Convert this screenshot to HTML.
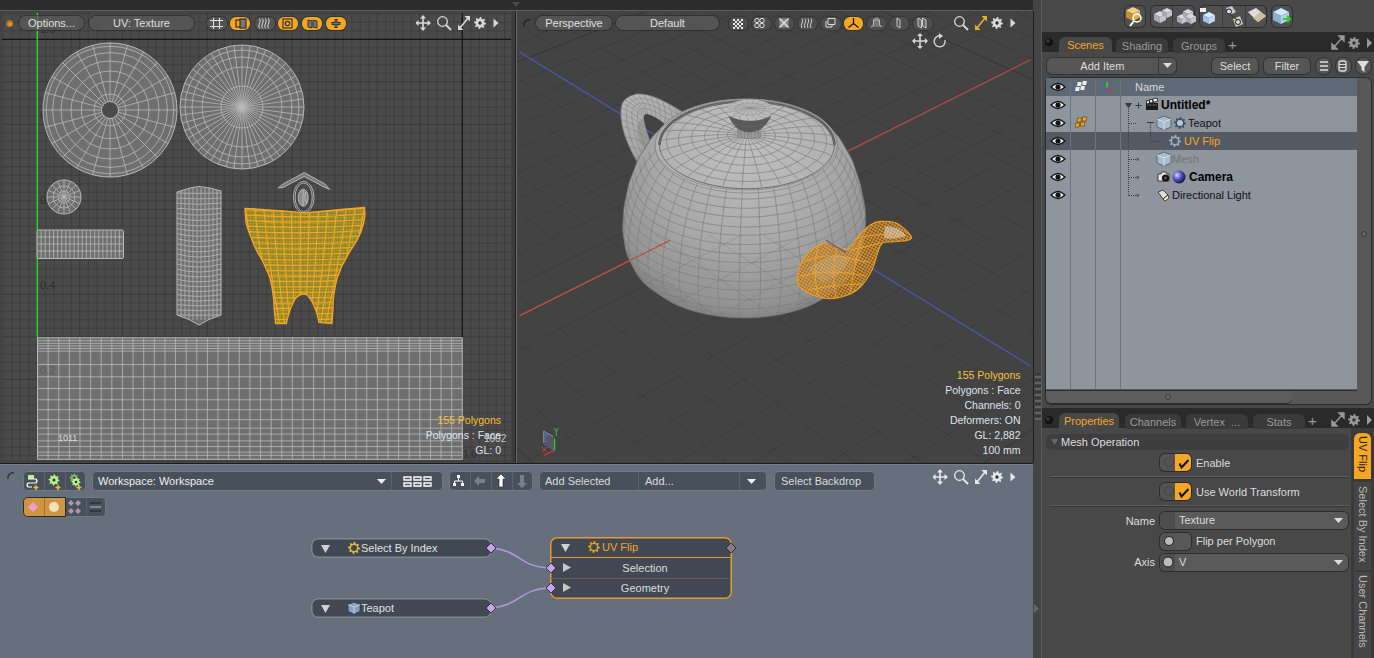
<!DOCTYPE html>
<html><head><meta charset="utf-8"><style>
html,body{margin:0;padding:0;width:1374px;height:658px;overflow:hidden;background:#3a3a3a;font-family:"Liberation Sans", sans-serif;}
div{box-sizing:border-box;}
svg{position:absolute;}
</style></head><body>
<div style="position:absolute;left:0px;top:0px;width:1374px;height:658px;background:#3a3a3a"></div><div style="position:absolute;left:0px;top:0px;width:1034px;height:10px;background:#2c2c2c"></div><div style="position:absolute;left:0px;top:10px;width:1034px;height:1px;background:#5c5c5c"></div><div style="position:absolute;left:0;top:11px;width:512px;height:452px;background:#424242;overflow:hidden"><svg width="512" height="452" viewBox="0 11 512 452" style="left:0;top:0"><rect x="2" y="13" width="509" height="447" fill="#4a4a4a"/><path d="M3.3 13V460M11.8 13V460M20.3 13V460M28.8 13V460M45.8 13V460M54.3 13V460M62.8 13V460M71.3 13V460M88.3 13V460M96.8 13V460M105.3 13V460M113.8 13V460M130.8 13V460M139.3 13V460M147.8 13V460M156.3 13V460M173.3 13V460M181.8 13V460M190.3 13V460M198.8 13V460M215.8 13V460M224.3 13V460M232.8 13V460M241.3 13V460M258.3 13V460M266.8 13V460M275.3 13V460M283.8 13V460M300.8 13V460M309.3 13V460M317.8 13V460M326.3 13V460M343.3 13V460M351.8 13V460M360.3 13V460M368.8 13V460M385.8 13V460M394.3 13V460M402.8 13V460M411.3 13V460M428.3 13V460M436.8 13V460M445.3 13V460M453.8 13V460M470.8 13V460M479.3 13V460M487.8 13V460M496.3 13V460M2 13.8H511M2 22.3H511M2 30.8H511M2 47.8H511M2 56.3H511M2 64.8H511M2 73.3H511M2 90.3H511M2 98.8H511M2 107.3H511M2 115.8H511M2 132.8H511M2 141.3H511M2 149.8H511M2 158.3H511M2 175.3H511M2 183.8H511M2 192.3H511M2 200.8H511M2 217.8H511M2 226.3H511M2 234.8H511M2 243.3H511M2 260.3H511M2 268.8H511M2 277.3H511M2 285.8H511M2 302.8H511M2 311.3H511M2 319.8H511M2 328.3H511M2 345.3H511M2 353.8H511M2 362.3H511M2 370.8H511M2 387.8H511M2 396.3H511M2 404.8H511M2 413.3H511M2 430.3H511M2 438.8H511M2 447.3H511M2 455.8H511" stroke="#3f3f3f" stroke-width="1" fill="none"/><path d="M37.3 13V460M79.8 13V460M122.3 13V460M164.8 13V460M207.3 13V460M249.8 13V460M292.3 13V460M334.8 13V460M377.3 13V460M419.8 13V460M462.3 13V460M504.8 13V460M2 39.3H511M2 81.8H511M2 124.3H511M2 166.8H511M2 209.3H511M2 251.8H511M2 294.3H511M2 336.8H511M2 379.3H511M2 421.8H511" stroke="#393939" stroke-width="1" fill="none"/><path d="M462.3 13V460M2 39.3H511" stroke="#141414" stroke-width="1.2" fill="none"/><path d="M37.3 13V337.5" stroke="#22dd22" stroke-width="1.4" fill="none"/><text x="40" y="289" font-size="11" fill="#2e2e2e" font-family="Liberation Sans">0.4</text><text x="40" y="204" font-size="11" fill="#2e2e2e" font-family="Liberation Sans">0.6</text><text x="40" y="119" font-size="11" fill="#2e2e2e" font-family="Liberation Sans">0.8</text><text x="40" y="33" font-size="11" fill="#2e2e2e" font-family="Liberation Sans">1.0</text><ellipse cx="110" cy="110" rx="67" ry="67" fill="#6f6f6f" stroke="#b9b9b9" stroke-width="1"/><path d="M118.5 110L177 110M118.21 112.2L174.72 127.34M117.36 114.25L168.02 143.5M116.01 116.01L157.38 157.38M114.25 117.36L143.5 168.02M112.2 118.21L127.34 174.72M110 118.5L110 177M107.8 118.21L92.66 174.72M105.75 117.36L76.5 168.02M103.99 116.01L62.62 157.38M102.64 114.25L51.98 143.5M101.79 112.2L45.28 127.34M101.5 110L43 110M101.79 107.8L45.28 92.66M102.64 105.75L51.98 76.5M103.99 103.99L62.62 62.62M105.75 102.64L76.5 51.98M107.8 101.79L92.66 45.28M110 101.5L110 43M112.2 101.79L127.34 45.28M114.25 102.64L143.5 51.98M116.01 103.99L157.38 62.62M117.36 105.75L168.02 76.5M118.21 107.8L174.72 92.66" stroke="#b9b9b9" stroke-width="0.8" fill="none"/><ellipse cx="110" cy="110" rx="16" ry="16" fill="none" stroke="#b9b9b9" stroke-width="0.8"/><ellipse cx="110" cy="110" rx="28.7" ry="28.7" fill="none" stroke="#b9b9b9" stroke-width="0.8"/><ellipse cx="110" cy="110" rx="39" ry="39" fill="none" stroke="#b9b9b9" stroke-width="0.8"/><ellipse cx="110" cy="110" rx="49" ry="49" fill="none" stroke="#b9b9b9" stroke-width="0.8"/><ellipse cx="110" cy="110" rx="57.4" ry="57.4" fill="none" stroke="#b9b9b9" stroke-width="0.8"/><ellipse cx="110" cy="110" rx="63.8" ry="63.8" fill="none" stroke="#b9b9b9" stroke-width="0.8"/><circle cx="110" cy="110" r="8.5" fill="#4a4a4a" stroke="#b9b9b9" stroke-width="1"/><ellipse cx="242" cy="107" rx="62" ry="62" fill="#6f6f6f" stroke="#b9b9b9" stroke-width="1"/><path d="M242 107L304 107M242 107L303.47 115.09M242 107L301.89 123.05M242 107L299.28 130.73M242 107L295.69 138M242 107L291.19 144.74M242 107L285.84 150.84M242 107L279.74 156.19M242 107L273 160.69M242 107L265.73 164.28M242 107L258.05 166.89M242 107L250.09 168.47M242 107L242 169M242 107L233.91 168.47M242 107L225.95 166.89M242 107L218.27 164.28M242 107L211 160.69M242 107L204.26 156.19M242 107L198.16 150.84M242 107L192.81 144.74M242 107L188.31 138M242 107L184.72 130.73M242 107L182.11 123.05M242 107L180.53 115.09M242 107L180 107M242 107L180.53 98.91M242 107L182.11 90.95M242 107L184.72 83.27M242 107L188.31 76M242 107L192.81 69.26M242 107L198.16 63.16M242 107L204.26 57.81M242 107L211 53.31M242 107L218.27 49.72M242 107L225.95 47.11M242 107L233.91 45.53M242 107L242 45M242 107L250.09 45.53M242 107L258.05 47.11M242 107L265.73 49.72M242 107L273 53.31M242 107L279.74 57.81M242 107L285.84 63.16M242 107L291.19 69.26M242 107L295.69 76M242 107L299.28 83.27M242 107L301.89 90.95M242 107L303.47 98.91" stroke="#b9b9b9" stroke-width="0.8" fill="none"/><ellipse cx="242" cy="107" rx="21" ry="21" fill="none" stroke="#b9b9b9" stroke-width="0.8"/><ellipse cx="242" cy="107" rx="40" ry="40" fill="none" stroke="#b9b9b9" stroke-width="0.8"/><ellipse cx="242" cy="107" rx="50" ry="50" fill="none" stroke="#b9b9b9" stroke-width="0.8"/><ellipse cx="242" cy="107" rx="57" ry="57" fill="none" stroke="#b9b9b9" stroke-width="0.8"/><ellipse cx="64" cy="197" rx="17" ry="17" fill="#6f6f6f" stroke="#b9b9b9" stroke-width="1"/><path d="M64 197L81 197M64 197L79.71 203.51M64 197L76.02 209.02M64 197L70.51 212.71M64 197L64 214M64 197L57.49 212.71M64 197L51.98 209.02M64 197L48.29 203.51M64 197L47 197M64 197L48.29 190.49M64 197L51.98 184.98M64 197L57.49 181.29M64 197L64 180M64 197L70.51 181.29M64 197L76.02 184.98M64 197L79.71 190.49" stroke="#b9b9b9" stroke-width="0.8" fill="none"/><ellipse cx="64" cy="197" rx="6" ry="6" fill="none" stroke="#b9b9b9" stroke-width="0.8"/><ellipse cx="64" cy="197" rx="11" ry="11" fill="none" stroke="#b9b9b9" stroke-width="0.8"/><rect x="37" y="230" width="86.5" height="28.5" rx="1.5" fill="#6f6f6f" stroke="#b9b9b9" stroke-width="1"/><path d="M41.12 230V258.5M45.24 230V258.5M49.36 230V258.5M53.48 230V258.5M57.6 230V258.5M61.71 230V258.5M65.83 230V258.5M69.95 230V258.5M74.07 230V258.5M78.19 230V258.5M82.31 230V258.5M86.43 230V258.5M90.55 230V258.5M94.67 230V258.5M98.79 230V258.5M102.9 230V258.5M107.02 230V258.5M111.14 230V258.5M115.26 230V258.5M119.38 230V258.5M37 237H123.5M37 244H123.5M37 251H123.5" stroke="#b9b9b9" stroke-width="0.8" fill="none"/><path d="M177 192L190 188L199 186.5L210 188L221 191L221 315Q208 319 199 325Q190 319 177 315Z" fill="#6f6f6f" stroke="#b9b9b9" stroke-width="1"/><clipPath id="tallclip"><path d="M177 192L190 188L199 186.5L210 188L221 191L221 315Q208 319 199 325Q190 319 177 315Z"/></clipPath><g clip-path="url(#tallclip)"><path d="M181 188V320M185 188V320M189 188V320M193 188V320M197 188V320M201 188V320M205 188V320M209 188V320M213 188V320M217 188V320M177 193.08Q199 193.8 221 193.08M177 198.15Q199 199.59 221 198.15M177 203.23Q199 205.36 221 203.23M177 208.31Q199 211.1 221 208.31M177 213.38Q199 216.79 221 213.38M177 218.46Q199 222.44 221 218.46M177 223.54Q199 228.03 221 223.54M177 228.62Q199 233.55 221 228.62M177 233.69Q199 239.01 221 233.69M177 238.77Q199 244.38 221 238.77M177 243.85Q199 249.67 221 243.85M177 248.92Q199 254.88 221 248.92M177 254Q199 260 221 254M177 259.08Q199 265.03 221 259.08M177 264.15Q199 269.98 221 264.15M177 269.23Q199 274.84 221 269.23M177 274.31Q199 279.62 221 274.31M177 279.38Q199 284.32 221 279.38M177 284.46Q199 288.95 221 284.46M177 289.54Q199 293.52 221 289.54M177 294.62Q199 298.02 221 294.62M177 299.69Q199 302.48 221 299.69M177 304.77Q199 306.9 221 304.77M177 309.85Q199 311.28 221 309.85M177 314.92Q199 315.65 221 314.92" stroke="#b9b9b9" stroke-width="0.8" fill="none"/></g><path d="M278.4 187.8L283 184L304.2 172.6L325 184L329.6 189.3L325 187.5L304.2 176.5L283 187.5Z" fill="#7a7a7a" stroke="#bdbdbd" stroke-width="0.9"/><ellipse cx="303.7" cy="197.3" rx="10.3" ry="16" fill="none" stroke="#b9b9b9" stroke-width="0.9"/><ellipse cx="303.7" cy="197.3" rx="8.6" ry="14.3" fill="none" stroke="#b9b9b9" stroke-width="0.9"/><ellipse cx="303.2" cy="197.7" rx="5" ry="8.5" fill="#8a8a8a" stroke="#bdbdbd" stroke-width="0.9"/><path d="M303 190V206M306 192Q303 198 307 203" stroke="#c4c4c4" stroke-width="0.8" fill="none"/><defs><pattern id="opat" width="3" height="3" patternUnits="userSpaceOnUse"><rect width="3" height="3" fill="#8c8a2c"/><circle cx="1.5" cy="1.5" r="0.8" fill="#d09a2a"/></pattern></defs><clipPath id="oclip"><path d="M244.9 208.3Q275 210 305.2 212.8Q335 210 364.5 207.5L364.9 215.8Q363 232 352.6 247.4Q342 263 336.8 279Q333 295 332.9 310.7L331.9 323.5L319 322.5Q316 305 307.2 294.9Q301 292 295.3 298.8Q289 310 286.4 323.5L275.6 323.5Q274 310 273.6 298.8Q272 285 269.6 277Q266 268 261.7 259.3Q255 249 251.9 239.5Q247 228 245.9 221.7Z"/></clipPath><path d="M244.9 208.3Q275 210 305.2 212.8Q335 210 364.5 207.5L364.9 215.8Q363 232 352.6 247.4Q342 263 336.8 279Q333 295 332.9 310.7L331.9 323.5L319 322.5Q316 305 307.2 294.9Q301 292 295.3 298.8Q289 310 286.4 323.5L275.6 323.5Q274 310 273.6 298.8Q272 285 269.6 277Q266 268 261.7 259.3Q255 249 251.9 239.5Q247 228 245.9 221.7Z" fill="url(#opat)"/><g clip-path="url(#oclip)"><path d="M245 205Q252 260 270 326M254.23 205Q260 260 275 326M263.46 205Q268 260 280 326M272.69 205Q276 260 285 326M281.92 205Q284 260 290 326M291.15 205Q292 260 295 326M300.38 205Q300 260 300 326M309.62 205Q308 260 305 326M318.85 205Q316 260 310 326M328.08 205Q324 260 315 326M337.31 205Q332 260 320 326M346.54 205Q340 260 325 326M355.77 205Q348 260 330 326M365 205Q356 260 335 326M240 209Q305 214 370 208M240 214.52Q305 219.29 370 213.52M240 220.05Q305 224.57 370 219.05M240 225.57Q305 229.86 370 224.57M240 231.1Q305 235.14 370 230.1M240 236.62Q305 240.43 370 235.62M240 242.14Q305 245.71 370 241.14M240 247.67Q305 251 370 246.67M240 253.19Q305 256.29 370 252.19M240 258.71Q305 261.57 370 257.71M240 264.24Q305 266.86 370 263.24M240 269.76Q305 272.14 370 268.76M240 275.29Q305 277.43 370 274.29M240 280.81Q305 282.71 370 279.81M240 286.33Q305 288 370 285.33M240 291.86Q305 293.29 370 290.86M240 297.38Q305 298.57 370 296.38M240 302.9Q305 303.86 370 301.9M240 308.43Q305 309.14 370 307.43M240 313.95Q305 314.43 370 312.95M240 319.48Q305 319.71 370 318.48M240 325Q305 325 370 324" stroke="#f5a623" stroke-width="1.1" fill="none"/></g><path d="M244.9 208.3Q275 210 305.2 212.8Q335 210 364.5 207.5L364.9 215.8Q363 232 352.6 247.4Q342 263 336.8 279Q333 295 332.9 310.7L331.9 323.5L319 322.5Q316 305 307.2 294.9Q301 292 295.3 298.8Q289 310 286.4 323.5L275.6 323.5Q274 310 273.6 298.8Q272 285 269.6 277Q266 268 261.7 259.3Q255 249 251.9 239.5Q247 228 245.9 221.7Z" fill="none" stroke="#f5a623" stroke-width="1.3"/><rect x="37.5" y="337.8" width="424.8" height="121.5" fill="#6f6f6f" stroke="#b9b9b9" stroke-width="1"/><path d="M48.12 337.8V459.3M58.74 337.8V459.3M69.36 337.8V459.3M79.98 337.8V459.3M90.6 337.8V459.3M101.22 337.8V459.3M111.84 337.8V459.3M122.46 337.8V459.3M133.08 337.8V459.3M143.7 337.8V459.3M154.32 337.8V459.3M164.94 337.8V459.3M175.56 337.8V459.3M186.18 337.8V459.3M196.8 337.8V459.3M207.42 337.8V459.3M218.04 337.8V459.3M228.66 337.8V459.3M239.28 337.8V459.3M249.9 337.8V459.3M260.52 337.8V459.3M271.14 337.8V459.3M281.76 337.8V459.3M292.38 337.8V459.3M303 337.8V459.3M313.62 337.8V459.3M324.24 337.8V459.3M334.86 337.8V459.3M345.48 337.8V459.3M356.1 337.8V459.3M366.72 337.8V459.3M377.34 337.8V459.3M387.96 337.8V459.3M398.58 337.8V459.3M409.2 337.8V459.3M419.82 337.8V459.3M430.44 337.8V459.3M441.06 337.8V459.3M451.68 337.8V459.3M37.5 340.7H462.3M37.5 343.3H462.3M37.5 346H462.3M37.5 348.5H462.3M37.5 351.1H462.3M37.5 364.5H462.3M37.5 376.8H462.3M37.5 388.5H462.3M37.5 399.8H462.3M37.5 409.7H462.3M37.5 419.7H462.3M37.5 428.2H462.3M37.5 434.1H462.3M37.5 440.9H462.3M37.5 446.6H462.3M37.5 452.2H462.3M37.5 455.3H462.3" stroke="#b9b9b9" stroke-width="0.8" fill="none"/><text x="40" y="374" font-size="11" fill="#5e5e5e" font-family="Liberation Sans">0.2</text><text x="58" y="441" font-size="9" fill="#ddd" font-family="Liberation Sans">1011</text><text x="484" y="441.5" font-size="10" fill="#c8c8c8" font-family="Liberation Sans">1002</text><text x="463" y="458" font-size="10" fill="#2e2e2e" font-family="Liberation Sans">1.0</text></svg><div style="position:absolute;left:6px;top:9px;width:7px;height:7px;border-radius:50%;background:radial-gradient(circle at 60% 60%,#f0a030,#7a5010)"></div><div style="position:absolute;left:19px;top:5px;width:65px;height:14px;border-radius:7px;background:rgba(90,90,90,0.75);box-shadow:0 0 0 1px rgba(40,40,40,0.6);color:#e0e0e0;font-size:11px;line-height:14px;text-align:center;white-space:nowrap">Options...</div><div style="position:absolute;left:89px;top:5px;width:105px;height:14px;border-radius:7px;background:rgba(90,90,90,0.75);box-shadow:0 0 0 1px rgba(40,40,40,0.6);color:#e0e0e0;font-size:11px;line-height:14px;text-align:center;white-space:nowrap">UV: Texture</div><div style="position:absolute;left:207px;top:6px;width:20px;height:13px;border-radius:6px;background:rgba(85,85,85,0.8);box-shadow:0 0 0 1px rgba(45,45,45,0.7)"></div><div style="position:absolute;left:230px;top:6px;width:20px;height:13px;border-radius:6px;background:#f5a623;box-shadow:0 0 0 1px rgba(45,45,45,0.7)"></div><div style="position:absolute;left:255px;top:6px;width:20px;height:13px;border-radius:6px;background:rgba(85,85,85,0.8);box-shadow:0 0 0 1px rgba(45,45,45,0.7)"></div><div style="position:absolute;left:278px;top:6px;width:20px;height:13px;border-radius:6px;background:#f5a623;box-shadow:0 0 0 1px rgba(45,45,45,0.7)"></div><div style="position:absolute;left:302px;top:6px;width:20px;height:13px;border-radius:6px;background:#f5a623;box-shadow:0 0 0 1px rgba(45,45,45,0.7)"></div><div style="position:absolute;left:326px;top:6px;width:20px;height:13px;border-radius:6px;background:#f5a623;box-shadow:0 0 0 1px rgba(45,45,45,0.7)"></div><svg width="512" height="40" style="left:0;top:0" viewBox="0 11 512 40"><path d="M213.5 18V29M219.5 18V29M210 20.5H223M210 26.5H223" stroke="#e0e0e0" stroke-width="1.1" fill="none"/><rect x="236" y="20" width="6" height="7" fill="none" stroke="#333" stroke-width="1.2"/><rect x="240" y="19" width="6" height="9" fill="#777" stroke="#333" stroke-width="1.2"/><path d="M259.5 18.5Q261 21 259.5 23.5Q258 26 259.5 28.5" stroke="#d0d0d0" stroke-width="1.1" fill="none"/><path d="M262.5 18.5Q264 21 262.5 23.5Q261 26 262.5 28.5" stroke="#d0d0d0" stroke-width="1.1" fill="none"/><path d="M265.5 18.5Q267 21 265.5 23.5Q264 26 265.5 28.5" stroke="#d0d0d0" stroke-width="1.1" fill="none"/><path d="M268.5 18.5Q270 21 268.5 23.5Q267 26 268.5 28.5" stroke="#d0d0d0" stroke-width="1.1" fill="none"/><rect x="283" y="19" width="9" height="9" fill="none" stroke="#333" stroke-width="1.2"/><circle cx="287.5" cy="23.5" r="2.2" fill="none" stroke="#333" stroke-width="1.2"/><path d="M308 20L312 21V28L308 27Z M313 20L317 21V28L313 27Z" fill="#777" stroke="#333" stroke-width="1"/><path d="M336 19V28M331.5 23.5H340.5" stroke="#333" stroke-width="3" fill="none"/><path d="M336 20V27M332.5 23.5H339.5" stroke="#777" stroke-width="1" fill="none"/></svg><svg width="100" height="20" style="left:415.5px;top:2.5px" viewBox="0 0 100 20"><path d="M7 3.5V14.5M1.5 9H12.5" stroke="#d8d8d8" stroke-width="1.6"/><path d="M7 1L4 4.5H10ZM7 17L4 13.5H10ZM-1 9L2.5 6V12ZM15 9L11.5 6V12Z" fill="#d8d8d8"/><circle cx="26.5" cy="7.5" r="4.8" fill="none" stroke="#d8d8d8" stroke-width="1.3"/><path d="M30 11L35 16" stroke="#d8d8d8" stroke-width="1.8"/><path d="M42 16V10.5L47.5 16ZM54 2V7.5L48.5 2Z" fill="#d8d8d8"/><path d="M44 14L52 4" stroke="#d8d8d8" stroke-width="1.6"/><path d="M64.00 3.00L65.17 3.12L65.65 5.01L66.40 5.41L68.24 4.76L68.99 5.67L67.99 7.35L68.24 8.16L70.00 9.00L69.88 10.17L67.99 10.65L67.59 11.40L68.24 13.24L67.33 13.99L65.65 12.99L64.84 13.24L64.00 15.00L62.83 14.88L62.35 12.99L61.60 12.59L59.76 13.24L59.01 12.33L60.01 10.65L59.76 9.84L58.00 9.00L58.12 7.83L60.01 7.35L60.41 6.60L59.76 4.76L60.67 4.01L62.35 5.01L63.16 4.76Z" fill="#d8d8d8"/><circle cx="64" cy="9" r="1.68" fill="#333"/><path d="M77.5 4.5V13.5L82.5 9Z" fill="#d8d8d8"/></svg><div style="position:absolute;right:11px;top:401.5px;font-size:10.5px;line-height:15px;text-align:right;color:#dde3ee;white-space:nowrap"><span style="color:#f8c038">155 Polygons</span><br>Polygons : Face<br>GL: 0</div></div><div style="position:absolute;left:512px;top:11px;width:4px;height:451px;background:#3c3c3c"></div><div style="position:absolute;left:515px;top:11px;width:1px;height:451px;background:#1e1e1e"></div><div style="position:absolute;left:516px;top:11px;width:1px;height:452px;background:#6a6a6a;z-index:5"></div><svg width="10" height="8" style="left:511px;top:1px"><path d="M1 1H9L5 6Z" fill="#4a4a4a"/></svg><div style="position:absolute;left:516px;top:11px;width:517px;height:452px;background:#434343;overflow:hidden"><svg width="517" height="452" viewBox="516 11 517 452" style="left:0;top:0"><path d="M500 -2199.27L1050 -2832.72M500 -3815.31L1050 -5149.84M500 19048.14L1050 27632.29M500 1517.96L1050 2497.13M500 432.35L1050 940.56M500 -162.49L1050 87.66M500 -286.04L1050 -89.5M500 -369.3L1050 -208.88M500 -429.21L1050 -294.78M500 -474.39L1050 -359.55M500 -509.67L1050 -410.14M500 -392.67L1050 -507.79M500 -344.44L1050 -470.33M500 -283.13L1050 -422.71M500 -202.58L1050 -360.15M500 -92.06L1050 -274.3M500 68.99L1050 -149.22M500 798.04L1050 417.03M500 1958.15L1050 1318.08M500 9312.98L1050 7030.54M500 -6850.58L1050 -5523.62" stroke="#343434" stroke-width="1" fill="none"/><path d="M500 -2278.61L1050 -2946.48M500 -2367.46L1050 -3073.88M500 -2467.64L1050 -3217.52M500 -2581.48L1050 -3380.74M500 -2711.95L1050 -3567.82M500 -2863.01L1050 -3784.41M500 -3039.94L1050 -4038.09M500 -3249.99L1050 -4339.27M500 -3503.45L1050 -4702.69M500 -4208.39L1050 -5713.45M500 -4719.17L1050 -6445.81M500 -5409.8L1050 -7436.05M500 -6395.6L1050 -8849.51M500 -7917.2L1050 -11031.22M500 -10574.47L1050 -14841.27M500 -16395.76L1050 -23187.97M500 -39346.7L1050 -56095.55M500 80999.86L1050 116460.05M500 10495.58L1050 15369.43M500 7094.66L1050 10493.11M500 5268.12L1050 7874.18M500 4128.2L1050 6239.75M500 3349L1050 5122.51M500 2782.69L1050 4310.52M500 2352.5L1050 3693.71M500 2014.63L1050 3209.26M500 1742.23L1050 2818.69M500 1330.1L1050 2227.76M500 1170.44L1050 1998.84M500 1033.08L1050 1801.89M500 913.65L1050 1630.65M500 808.86L1050 1480.4M500 716.17L1050 1347.5M500 633.6L1050 1229.1M500 559.57L1050 1122.96M500 492.83L1050 1027.27M500 377.29L1050 861.61M500 326.96L1050 789.43M500 280.76L1050 723.19M500 238.21L1050 662.19M500 198.89L1050 605.82M500 162.46L1050 553.57M500 128.59L1050 505.02M500 97.04L1050 459.77M500 67.56L1050 417.51M500 14.09L1050 340.84M500 -10.24L1050 305.96M500 -33.15L1050 273.1M500 -54.77L1050 242.11M500 -75.19L1050 212.83M500 -94.52L1050 185.11M500 -112.84L1050 158.84M500 -130.23L1050 133.91M500 -146.76L1050 110.21M500 -177.47L1050 66.18M500 -191.76L1050 45.69M500 -205.41L1050 26.12M500 -218.45L1050 7.42M500 -230.93L1050 -10.48M500 -242.89L1050 -27.62M500 -254.35L1050 -44.05M500 -265.34L1050 -59.81M500 -275.9L1050 -74.95M500 -295.8L1050 -103.49M500 -305.19L1050 -116.96M500 -314.24L1050 -129.93M500 -322.96L1050 -142.43M500 -331.37L1050 -154.49M500 -339.49L1050 -166.12M500 -347.32L1050 -177.36M500 -354.9L1050 -188.22M500 -362.22L1050 -198.72M500 -376.16L1050 -218.71M500 -382.8L1050 -228.23M500 -389.23L1050 -237.45M500 -395.47L1050 -246.39M500 -401.52L1050 -255.07M500 -407.39L1050 -263.48M500 -413.08L1050 -271.65M500 -418.62L1050 -279.58M500 -423.99L1050 -287.29M500 -434.29L1050 -302.06M500 -439.24L1050 -309.15M500 -444.04L1050 -316.04M500 -448.72L1050 -322.75M500 -453.28L1050 -329.29M500 -457.72L1050 -335.66M500 -462.05L1050 -341.86M500 -466.27L1050 -347.91M500 -470.38L1050 -353.8M500 -478.31L1050 -365.17M500 -482.13L1050 -370.64M500 -485.85L1050 -375.99M500 -489.5L1050 -381.21M500 -493.05L1050 -386.31M500 -496.53L1050 -391.3M500 -499.93L1050 -396.17M500 -503.25L1050 -400.93M500 -506.5L1050 -405.59M500 -512.78L1050 -414.6M500 -515.82L1050 -418.96M500 -518.8L1050 -423.23M500 -521.71L1050 -427.41M500 -524.57L1050 -431.5M500 -527.36L1050 -435.51M500 -530.1L1050 -439.43M500 -532.78L1050 -443.28M500 -535.41L1050 -447.05M500 -388.31L1050 -504.41M500 -383.86L1050 -500.95M500 -379.31L1050 -497.42M500 -374.66L1050 -493.81M500 -369.91L1050 -490.11M500 -365.05L1050 -486.34M500 -360.07L1050 -482.47M500 -354.98L1050 -478.52M500 -349.77L1050 -474.47M500 -338.97L1050 -466.08M500 -333.37L1050 -461.74M500 -327.64L1050 -457.28M500 -321.76L1050 -452.71M500 -315.73L1050 -448.03M500 -309.54L1050 -443.23M500 -303.2L1050 -438.3M500 -296.68L1050 -433.24M500 -289.99L1050 -428.04M500 -276.07L1050 -417.23M500 -268.81L1050 -411.59M500 -261.35L1050 -405.8M500 -253.68L1050 -399.84M500 -245.78L1050 -393.7M500 -237.65L1050 -387.39M500 -229.28L1050 -380.88M500 -220.65L1050 -374.18M500 -211.75L1050 -367.27M500 -193.11L1050 -352.79M500 -183.34L1050 -345.2M500 -173.24L1050 -337.36M500 -162.81L1050 -329.26M500 -152.02L1050 -320.88M500 -140.86L1050 -312.21M500 -129.3L1050 -303.23M500 -117.33L1050 -293.94M500 -104.92L1050 -284.3M500 -78.7L1050 -263.93M500 -64.83L1050 -253.16M500 -50.41L1050 -241.96M500 -35.41L1050 -230.3M500 -19.79L1050 -218.18M500 -3.52L1050 -205.54M500 13.44L1050 -192.36M500 31.15L1050 -178.61M500 49.65L1050 -164.24M500 89.24L1050 -133.49M500 110.46L1050 -117.01M500 132.73L1050 -99.72M500 156.11L1050 -81.56M500 180.7L1050 -62.46M500 206.59L1050 -42.35M500 233.89L1050 -21.15M500 262.71L1050 1.24M500 293.2L1050 24.92M500 359.76L1050 76.62M500 396.19L1050 104.91M500 434.98L1050 135.04M500 476.39L1050 167.2M500 520.67L1050 201.6M500 568.15L1050 238.47M500 619.17L1050 278.1M500 674.16L1050 320.81M500 733.6L1050 366.98M500 868.15L1050 471.48M500 944.7L1050 530.94M500 1028.64L1050 596.13M500 1121.07L1050 667.93M500 1223.37L1050 747.38M500 1337.2L1050 835.79M500 1464.63L1050 934.76M500 1608.24L1050 1046.31M500 1771.33L1050 1172.98M500 2174.28L1050 1485.95M500 2427.22L1050 1682.4M500 2727.23L1050 1915.42M500 3088.82L1050 2196.26M500 3533.09L1050 2541.33M500 4092.09L1050 2975.5M500 4816.82L1050 3538.4M500 5793.84L1050 4297.24M500 7182.62L1050 5375.9M500 12995.27L1050 9890.56M500 20896.82L1050 16027.65M500 49997.51L1050 38630.02M500 -149555.1L1050 -116361.52M500 -30978.94L1050 -24263.99M500 -17591.57L1050 -13866.09M500 -12431.09L1050 -9857.97M500 -9696.48L1050 -7734.01M500 -8002.72L1050 -6418.48M500 -6016.07L1050 -4875.45M500 -5383.75L1050 -4384.34M500 -4888.08L1050 -3999.35M500 -4489.09L1050 -3689.46M500 -4161L1050 -3434.63M500 -3886.45L1050 -3221.39M500 -3653.33L1050 -3040.33M500 -3452.92L1050 -2884.68M500 -3278.79L1050 -2749.43" stroke="#3b3b3b" stroke-width="0.8" fill="none"/><path d="M519.6 52L1030.5 366" stroke="#4a5ab0" stroke-width="1.2"/><path d="M519.6 315.7L1030.5 59.8" stroke="#b85040" stroke-width="1.2"/><defs><radialGradient id="tbody" gradientUnits="userSpaceOnUse" cx="745" cy="160" r="170"><stop offset="0" stop-color="#bebebe"/><stop offset="0.5" stop-color="#a9a9a9"/><stop offset="0.85" stop-color="#939393"/><stop offset="1" stop-color="#7c7c7c"/></radialGradient><radialGradient id="tlid" gradientUnits="userSpaceOnUse" cx="745" cy="135" r="90"><stop offset="0" stop-color="#c0c0c0"/><stop offset="1" stop-color="#b2b2b2"/></radialGradient><linearGradient id="thandle" gradientUnits="userSpaceOnUse" x1="625" y1="95" x2="660" y2="160"><stop offset="0" stop-color="#b6b6b6"/><stop offset="1" stop-color="#a0a0a0"/></linearGradient></defs><path d="M641.0 168.0L637.6 162.8L634.6 157.5L631.8 152.3L629.3 147.1L627.1 141.9L625.2 136.7L623.5 131.5L622.2 126.3L621.6 122.8L621.2 119.5L620.9 116.4L620.9 113.4L620.9 110.6L621.2 108.0L621.6 105.6L622.2 103.3L623.3 101.6L624.6 100.0L626.1 98.5L627.9 97.2L630.0 96.1L632.2 95.2L634.7 94.4L637.5 93.7L640.6 93.9L643.8 94.3L646.9 94.8L650.1 95.6L653.3 96.6L656.5 97.8L659.8 99.2L663.0 100.8L665.9 102.2L668.9 103.8L672.2 105.7L675.8 107.7L679.5 110.0L683.4 112.4L687.6 115.1L692.0 118.0L694.0 142.0L690.5 139.5L686.9 137.2L683.4 134.8L679.8 132.6L676.1 130.4L672.4 128.4L668.7 126.3L665.0 124.4L662.8 122.6L660.6 121.0L658.4 119.5L656.2 118.2L654.1 117.1L652.1 116.1L650.0 115.2L648.0 114.5L647.1 114.3L646.2 114.3L645.5 114.5L645.0 114.9L644.5 115.4L644.2 116.1L644.0 117.0L643.9 118.0L644.2 120.5L644.7 123.1L645.3 125.8L646.0 128.6L646.8 131.4L647.7 134.3L648.8 137.3L650.0 140.3L650.6 144.0L651.5 147.8L652.6 151.6L654.0 155.6L655.6 159.6L657.5 163.6L659.6 167.8L662.0 172.0Z" fill="url(#thandle)" stroke="#6c6c6c" stroke-width="0.8"/><path d="M641.0 168.0Q652.0 167.5 662.0 172.0M634.6 157.5Q646.8 157.8 657.5 163.6M629.3 147.1Q642.7 148.4 654.0 155.6M625.2 136.7Q639.7 139.1 651.5 147.8M622.2 126.3Q637.8 130.0 650.0 140.3M621.2 119.5Q636.2 123.7 647.7 134.3M620.9 113.4Q635.2 118.0 646.0 128.6M621.2 108.0Q634.8 112.8 644.7 123.1M622.2 103.3Q634.8 108.0 643.9 118.0M624.6 100.0Q636.3 105.7 644.2 116.1M627.9 97.2Q638.6 104.0 645.0 114.9M632.2 95.2Q641.5 103.1 646.2 114.3M637.5 93.7Q645.2 102.8 648.0 114.5M643.8 94.3Q650.5 104.2 652.1 116.1M650.1 95.6Q655.9 106.2 656.2 118.2M656.5 97.8Q661.3 108.9 660.6 121.0M663.0 100.8Q666.8 112.4 665.0 124.4M668.9 103.8Q673.6 115.7 672.4 128.4M675.8 107.7Q680.7 119.7 679.8 132.6M683.4 112.4Q688.2 124.4 686.9 137.2M692.0 118.0Q695.9 129.8 694.0 142.0M645.6 168.9L642.5 163.9L639.6 158.9L637.0 153.9L634.7 148.9L632.7 144.0L631.0 139.1L629.5 134.2L628.3 129.4L627.6 126.0L627.0 122.8L626.6 119.7L626.4 116.7L626.3 114.0L626.4 111.3L626.6 108.9L627.0 106.5L627.8 104.9L628.9 103.5L630.2 102.2L631.7 101.1L633.4 100.2L635.3 99.4L637.5 98.7L639.8 98.3L642.7 98.6L645.6 99.1L648.5 99.7L651.5 100.6L654.4 101.7L657.4 102.9L660.4 104.4L663.4 106.0L666.5 107.5L669.7 109.2L673.1 111.1L676.6 113.2L680.3 115.4L684.2 117.9L688.2 120.5L692.4 123.3M650.5 169.8L647.5 165.0L644.9 160.3L642.5 155.6L640.4 150.9L638.6 146.3L637.0 141.7L635.7 137.1L634.7 132.6L633.9 129.3L633.1 126.2L632.6 123.1L632.2 120.2L631.9 117.5L631.8 114.8L631.8 112.3L632.0 109.9L632.6 108.5L633.4 107.2L634.4 106.1L635.6 105.2L637.0 104.4L638.5 103.8L640.3 103.3L642.2 103.1L644.9 103.5L647.5 104.1L650.2 104.8L652.9 105.8L655.6 106.9L658.3 108.2L661.1 109.7L663.9 111.4L667.2 113.1L670.5 114.9L674.0 116.8L677.5 118.9L681.2 121.2L685.0 123.6L688.9 126.1L692.9 128.8M655.7 170.8L653.0 166.3L650.6 161.8L648.5 157.4L646.6 153.0L645.0 148.7L643.6 144.5L642.5 140.3L641.7 136.1L640.7 132.9L639.8 129.9L639.0 126.9L638.4 124.0L638.0 121.3L637.6 118.6L637.4 116.0L637.4 113.6L637.8 112.3L638.3 111.3L639.0 110.3L639.9 109.6L640.9 109.0L642.0 108.6L643.4 108.3L644.9 108.3L647.2 108.8L649.6 109.5L652.0 110.4L654.4 111.4L656.9 112.7L659.4 114.0L661.9 115.6L664.4 117.3L667.9 119.1L671.4 121.0L674.9 123.0L678.5 125.1L682.2 127.4L685.9 129.7L689.6 132.2L693.4 134.8" stroke="#848484" stroke-width="0.6" fill="none"/><path d="M646 117Q634 120 638 140Q645 152 652 150L650 140.3Q645 128 643.9 118Z" fill="#7a7a7a" opacity="0.35"/><path d="M643.9 118Q644 113.5 648 114.5Q656 117 665 124.4L654 140.3Q646 130 643.9 118Z" fill="#434343"/><clipPath id="hclip"><path d="M643.9 118Q644 113.5 648 114.5Q656 117 665 124.4L654 140.3Q646 130 643.9 118Z"/></clipPath><g clip-path="url(#hclip)"><path d="M600 101.4L700 162.8" stroke="#4a5ab0" stroke-width="1.2"/></g><path d="M622.5 228.0L623.5 212.0L624.0 206.7L626.0 196.8L628.0 186.9L629.3 181.8L633.0 172.2L636.7 162.4L638.8 157.8L641.6 153.2L646.6 145.5L651.5 137.9L654.9 133.9L657.0 131.7L661.4 127.4L663.5 125.3L667.2 121.8L671.5 118.4L676.3 115.2L681.6 112.3L687.5 109.6L693.8 107.2L700.5 105.1L707.5 103.3L714.9 101.7L722.5 100.5L730.2 99.7L738.1 99.2L746.0 99.0L753.9 99.2L761.8 99.7L769.5 100.5L777.1 101.7L784.5 103.3L791.5 105.1L798.2 107.2L804.5 109.6L810.4 112.3L815.7 115.2L820.5 118.4L824.8 121.8L828.5 125.3L830.4 127.4L834.2 131.7L836.1 133.9L839.5 137.9L842.1 142.1L851.2 157.8L853.3 162.4L856.5 172.2L859.7 181.8L861.0 186.9L863.0 196.8L865.0 206.7L865.5 212.0L865.5 228.0L865.0 233.3L864.4 237.3L862.5 249.2L861.2 254.3L859.0 259.4L852.2 272.5L849.2 277.1L845.5 281.7L841.0 286.0L835.8 290.1L825.9 296.7L820.6 300.1L814.7 303.4L808.3 306.3L801.4 309.0L794.0 311.3L786.3 313.3L778.2 315.0L769.9 316.3L761.4 317.2L752.7 317.8L744.0 318.0L735.3 317.8L726.6 317.2L718.1 316.3L709.8 315.0L701.7 313.3L694.0 311.3L686.6 309.0L679.7 306.3L673.3 303.4L667.4 300.1L662.1 296.7L652.2 290.1L647.0 286.0L642.5 281.7L638.8 277.1L635.8 272.5L629.0 259.4L626.8 254.3L625.5 249.2L623.6 237.3L623.0 233.3Z" fill="url(#tbody)" stroke="#666" stroke-width="0.8"/><clipPath id="bclip"><path d="M622.5 228.0L623.5 212.0L624.0 206.7L626.0 196.8L628.0 186.9L629.3 181.8L633.0 172.2L636.7 162.4L638.8 157.8L641.6 153.2L646.6 145.5L651.5 137.9L654.9 133.9L657.0 131.7L661.4 127.4L663.5 125.3L667.2 121.8L671.5 118.4L676.3 115.2L681.6 112.3L687.5 109.6L693.8 107.2L700.5 105.1L707.5 103.3L714.9 101.7L722.5 100.5L730.2 99.7L738.1 99.2L746.0 99.0L753.9 99.2L761.8 99.7L769.5 100.5L777.1 101.7L784.5 103.3L791.5 105.1L798.2 107.2L804.5 109.6L810.4 112.3L815.7 115.2L820.5 118.4L824.8 121.8L828.5 125.3L830.4 127.4L834.2 131.7L836.1 133.9L839.5 137.9L842.1 142.1L851.2 157.8L853.3 162.4L856.5 172.2L859.7 181.8L861.0 186.9L863.0 196.8L865.0 206.7L865.5 212.0L865.5 228.0L865.0 233.3L864.4 237.3L862.5 249.2L861.2 254.3L859.0 259.4L852.2 272.5L849.2 277.1L845.5 281.7L841.0 286.0L835.8 290.1L825.9 296.7L820.6 300.1L814.7 303.4L808.3 306.3L801.4 309.0L794.0 311.3L786.3 313.3L778.2 315.0L769.9 316.3L761.4 317.2L752.7 317.8L744.0 318.0L735.3 317.8L726.6 317.2L718.1 316.3L709.8 315.0L701.7 313.3L694.0 311.3L686.6 309.0L679.7 306.3L673.3 303.4L667.4 300.1L662.1 296.7L652.2 290.1L647.0 286.0L642.5 281.7L638.8 277.1L635.8 272.5L629.0 259.4L626.8 254.3L625.5 249.2L623.6 237.3L623.0 233.3Z"/></clipPath><g clip-path="url(#bclip)"><path d="M842.1 150.8L841.8 154.6L840.9 158.3L839.4 162.1L837.4 165.7L834.8 169.2L831.6 172.7L827.9 176.0L823.7 179.1L819.0 182.1L813.9 184.9L808.3 187.5L802.4 189.8L796.1 191.9L789.5 193.7L782.6 195.3L775.5 196.6L768.2 197.7L760.8 198.4L753.3 198.9L745.7 199.0L738.1 198.9L730.6 198.4L723.2 197.7L715.9 196.6L708.8 195.3L701.9 193.7L695.3 191.9L689.0 189.8L683.1 187.5L677.5 184.9L672.4 182.1L667.7 179.1L663.5 176.0L659.8 172.7L656.6 169.2L654.0 165.7L652.0 162.1L650.5 158.3L649.6 154.6L649.3 150.8M846.9 157.5L846.6 161.5L845.7 165.5L844.1 169.4L842.0 173.2L839.2 177.0L835.9 180.6L832.0 184.1L827.5 187.4L822.6 190.5L817.2 193.4L811.3 196.1L805.1 198.6L798.5 200.8L791.5 202.8L784.3 204.4L776.8 205.8L769.1 206.9L761.3 207.7L753.4 208.1L745.4 208.3L737.5 208.1L729.5 207.7L721.7 206.9L714.1 205.8L706.6 204.4L699.3 202.8L692.4 200.8L685.8 198.6L679.5 196.1L673.7 193.4L668.2 190.5L663.3 187.4L658.9 184.1L655.0 180.6L651.7 177.0L648.9 173.2L646.7 169.4L645.2 165.5L644.2 161.5L643.9 157.5M850.7 164.4L850.4 168.5L849.4 172.6L847.8 176.7L845.6 180.7L842.7 184.5L839.2 188.3L835.2 191.9L830.6 195.4L825.4 198.6L819.8 201.6L813.7 204.5L807.2 207.0L800.3 209.3L793.1 211.4L785.6 213.1L777.8 214.5L769.9 215.6L761.7 216.5L753.5 216.9L745.2 217.1L736.9 216.9L728.7 216.5L720.6 215.6L712.6 214.5L704.9 213.1L697.3 211.4L690.1 209.3L683.2 207.0L676.7 204.5L670.6 201.6L665.0 198.6L659.9 195.4L655.3 191.9L651.2 188.3L647.8 184.5L644.9 180.7L642.6 176.7L641.0 172.6L640.1 168.5L639.7 164.4M855.0 172.0L854.7 176.3L853.6 180.6L852.0 184.8L849.6 189.0L846.6 193.0L843.0 197.0L838.8 200.7L834.0 204.3L828.6 207.7L822.8 210.9L816.4 213.8L809.7 216.5L802.5 218.9L794.9 221.0L787.1 222.8L779.0 224.3L770.7 225.5L762.2 226.3L753.6 226.8L745.0 227.0L736.4 226.8L727.8 226.3L719.3 225.5L711.0 224.3L702.9 222.8L695.1 221.0L687.5 218.9L680.3 216.5L673.6 213.8L667.2 210.9L661.4 207.7L656.0 204.3L651.2 200.7L647.0 197.0L643.4 193.0L640.4 189.0L638.0 184.8L636.4 180.6L635.3 176.3L635.0 172.0M857.3 179.0L856.9 183.4L855.9 187.8L854.2 192.1L851.8 196.4L848.7 200.5L845.0 204.5L840.7 208.4L835.8 212.0L830.3 215.5L824.3 218.8L817.9 221.8L810.9 224.5L803.6 226.9L795.9 229.1L787.9 230.9L779.6 232.5L771.1 233.7L762.4 234.5L753.6 235.1L744.8 235.2L736.0 235.1L727.2 234.5L718.6 233.7L710.1 232.5L701.8 230.9L693.8 229.1L686.1 226.9L678.7 224.5L671.8 221.8L665.3 218.8L659.3 215.5L653.9 212.0L648.9 208.4L644.6 204.5L640.9 200.5L637.9 196.4L635.5 192.1L633.8 187.8L632.7 183.4L632.4 179.0M859.9 187.0L859.5 191.5L858.5 196.0L856.7 200.5L854.2 204.8L851.1 209.1L847.3 213.2L842.9 217.1L837.9 220.9L832.3 224.4L826.1 227.7L819.5 230.8L812.4 233.6L804.8 236.1L796.9 238.3L788.7 240.2L780.2 241.8L771.5 243.0L762.7 243.9L753.7 244.4L744.6 244.6L735.6 244.4L726.6 243.9L717.7 243.0L709.0 241.8L700.5 240.2L692.3 238.3L684.4 236.1L676.9 233.6L669.8 230.8L663.1 227.7L657.0 224.4L651.4 220.9L646.4 217.1L641.9 213.2L638.1 209.1L635.0 204.8L632.6 200.5L630.8 196.0L629.7 191.5L629.4 187.0M862.1 195.0L861.7 199.6L860.7 204.2L858.9 208.7L856.3 213.2L853.1 217.5L849.3 221.7L844.8 225.7L839.6 229.6L833.9 233.2L827.7 236.6L820.9 239.7L813.6 242.6L805.9 245.1L797.9 247.4L789.5 249.3L780.8 250.9L772.0 252.2L762.9 253.1L753.7 253.6L744.5 253.8L735.3 253.6L726.1 253.1L717.0 252.2L708.2 250.9L699.5 249.3L691.1 247.4L683.1 245.1L675.4 242.6L668.1 239.7L661.3 236.6L655.1 233.2L649.4 229.6L644.2 225.7L639.7 221.7L635.9 217.5L632.7 213.2L630.1 208.7L628.3 204.2L627.3 199.6L626.9 195.0M863.7 203.0L863.3 207.7L862.2 212.3L860.4 216.9L857.9 221.4L854.6 225.8L850.7 230.1L846.1 234.1L840.9 238.0L835.1 241.7L828.8 245.1L821.9 248.3L814.6 251.2L806.8 253.8L798.6 256.1L790.1 258.1L781.3 259.7L772.3 261.0L763.1 261.9L753.9 262.4L744.5 262.6L735.1 262.4L725.9 261.9L716.7 261.0L707.7 259.7L698.9 258.1L690.4 256.1L682.2 253.8L674.4 251.2L667.1 248.3L660.2 245.1L653.9 241.7L648.1 238.0L642.9 234.1L638.3 230.1L634.4 225.8L631.1 221.4L628.6 216.9L626.8 212.3L625.7 207.7L625.3 203.0M865.5 212.0L865.1 216.7L864.0 221.5L862.2 226.1L859.6 230.7L856.3 235.2L852.3 239.5L847.7 243.6L842.4 247.6L836.5 251.3L830.1 254.8L823.1 258.0L815.6 260.9L807.7 263.6L799.4 265.9L790.8 267.9L781.9 269.5L772.7 270.8L763.4 271.8L754.0 272.3L744.5 272.5L735.0 272.3L725.6 271.8L716.3 270.8L707.1 269.5L698.2 267.9L689.6 265.9L681.3 263.6L673.4 260.9L665.9 258.0L658.9 254.8L652.5 251.3L646.6 247.6L641.3 243.6L636.7 239.5L632.7 235.2L629.4 230.7L626.8 226.1L625.0 221.5L623.9 216.7L623.5 212.0M865.5 220.8L865.1 225.6L864.0 230.3L862.1 235.0L859.6 239.5L856.3 244.0L852.3 248.3L847.6 252.5L842.3 256.4L836.4 260.2L830.0 263.7L823.0 266.9L815.5 269.9L807.6 272.5L799.3 274.8L790.6 276.8L781.7 278.5L772.5 279.8L763.2 280.7L753.7 281.3L744.2 281.4L734.7 281.3L725.3 280.7L715.9 279.8L706.7 278.5L697.8 276.8L689.2 274.8L680.9 272.5L672.9 269.9L665.5 266.9L658.5 263.7L652.0 260.2L646.1 256.4L640.8 252.5L636.2 248.3L632.2 244.0L628.9 239.5L626.3 235.0L624.4 230.3L623.3 225.6L623.0 220.8M865.2 229.6L864.9 234.4L863.8 239.1L861.9 243.8L859.3 248.3L856.0 252.8L852.0 257.1L847.4 261.3L842.1 265.2L836.2 269.0L829.7 272.5L822.7 275.7L815.3 278.6L807.4 281.3L799.0 283.6L790.4 285.6L781.5 287.3L772.3 288.5L763.0 289.5L753.5 290.0L744.0 290.2L734.5 290.0L725.0 289.5L715.7 288.5L706.5 287.3L697.6 285.6L689.0 283.6L680.6 281.3L672.7 278.6L665.3 275.7L658.3 272.5L651.8 269.0L645.9 265.2L640.6 261.3L636.0 257.1L632.0 252.8L628.7 248.3L626.1 243.8L624.2 239.1L623.1 234.4L622.8 229.6M863.6 240.0L863.3 244.7L862.2 249.4L860.3 254.0L857.8 258.5L854.5 262.9L850.6 267.2L846.0 271.3L840.8 275.2L835.0 278.8L828.6 282.3L821.7 285.5L814.3 288.4L806.5 291.0L798.3 293.3L789.8 295.3L781.0 296.9L771.9 298.2L762.7 299.1L753.4 299.6L744.0 299.8L734.6 299.6L725.3 299.1L716.1 298.2L707.0 296.9L698.2 295.3L689.7 293.3L681.5 291.0L673.7 288.4L666.3 285.5L659.4 282.3L653.0 278.8L647.2 275.2L642.0 271.3L637.4 267.2L633.5 262.9L630.2 258.5L627.7 254.0L625.8 249.4L624.7 244.7L624.4 240.0M859.5 251.0L859.1 255.5L858.1 260.0L856.3 264.5L853.8 268.8L850.7 273.1L846.9 277.2L842.5 281.2L837.4 284.9L831.8 288.5L825.7 291.8L819.0 294.9L811.9 297.7L804.3 300.2L796.4 302.5L788.2 304.4L779.7 305.9L771.0 307.2L762.1 308.0L753.1 308.6L744.0 308.8L734.9 308.6L725.9 308.0L717.0 307.2L708.3 305.9L699.8 304.4L691.6 302.5L683.7 300.2L676.1 297.7L669.0 294.9L662.3 291.8L656.2 288.5L650.6 284.9L645.5 281.2L641.1 277.2L637.3 273.1L634.2 268.8L631.7 264.5L629.9 260.0L628.9 255.5L628.5 251.0M844.0 268.0L843.7 271.9L842.8 275.8L841.2 279.7L839.1 283.5L836.4 287.1L833.1 290.7L829.3 294.1L824.9 297.4L820.0 300.5L814.7 303.4L808.9 306.0L802.8 308.5L796.2 310.6L789.4 312.6L782.3 314.2L774.9 315.6L767.3 316.6L759.6 317.4L751.8 317.8L744.0 318.0L736.2 317.8L728.4 317.4L720.7 316.6L713.1 315.6L705.7 314.2L698.6 312.6L691.8 310.6L685.2 308.5L679.1 306.0L673.3 303.4L668.0 300.5L663.1 297.4L658.7 294.1L654.9 290.7L651.6 287.1L648.9 283.5L646.8 279.7L645.2 275.8L644.3 271.9L644.0 268.0M836.9 146.3L841.2 151.7L845.4 157.0L850.2 165.6L854.9 174.2L858.2 184.3L861.4 194.3L863.4 204.4L865.4 214.4L865.4 222.4L865.4 230.4L864.2 238.4L862.9 246.4L859.4 253.3L855.9 260.2L849.9 265.1L843.9 270.0L836.4 273.3L828.9 276.7L821.4 279.5L813.9 282.4M834.9 154.2L839.1 159.9L843.2 165.6L847.8 174.7L852.5 183.7L855.6 194.1L858.8 204.5L860.8 214.7L862.7 224.9L862.7 232.9L862.7 240.9L861.5 248.8L860.3 256.7L856.9 263.3L853.4 269.9L847.6 274.3L841.7 278.6L834.4 281.3L827.1 284.0L819.7 286.2L812.4 288.5M830.2 161.8L834.1 167.9L838.0 174.0L842.4 183.4L846.8 192.9L849.8 203.5L852.8 214.2L854.6 224.6L856.5 234.9L856.4 243.0L856.4 251.0L855.3 258.8L854.1 266.6L850.9 272.9L847.6 279.2L842.1 283.1L836.5 287.0L829.6 289.0L822.6 291.1L815.7 292.7L808.8 294.3M822.9 168.8L826.5 175.3L830.0 181.7L834.0 191.5L838.0 201.4L840.7 212.3L843.4 223.3L845.1 233.8L846.8 244.3L846.7 252.4L846.7 260.5L845.7 268.1L844.6 275.8L841.6 281.9L838.7 287.9L833.6 291.3L828.5 294.7L822.2 296.2L815.9 297.7L809.5 298.7L803.2 299.7M813.3 175.1L816.4 181.9L819.5 188.6L822.9 198.8L826.4 209.0L828.7 220.2L831.0 231.4L832.5 242.0L834.0 252.7L833.9 260.8L833.9 268.9L833.0 276.5L832.0 284.0L829.4 289.9L826.8 295.7L822.4 298.7L818.0 301.6L812.4 302.6L806.9 303.6L801.3 304.1L795.8 304.6M801.7 180.5L804.2 187.5L806.7 194.6L809.5 205.0L812.3 215.5L814.2 226.9L816.1 238.3L817.3 249.1L818.5 259.9L818.4 268.0L818.3 276.1L817.5 283.6L816.8 291.1L814.6 296.7L812.5 302.3L808.8 304.9L805.2 307.6L800.6 308.1L796.0 308.6L791.4 308.7L786.8 308.7M788.3 184.8L790.2 192.0L792.0 199.3L794.1 210.0L796.1 220.7L797.5 232.2L798.9 243.8L799.8 254.7L800.8 265.6L800.6 273.7L800.5 281.8L799.9 289.2L799.3 296.7L797.7 302.1L796.1 307.6L793.3 309.9L790.5 312.3L787.0 312.4L783.5 312.6L780.0 312.3L776.5 312.0M773.7 187.8L774.8 195.2L775.9 202.6L777.2 213.5L778.5 224.4L779.3 236.1L780.1 247.7L780.7 258.7L781.3 269.6L781.1 277.8L781.0 285.9L780.6 293.3L780.2 300.7L779.1 306.0L778.1 311.3L776.2 313.5L774.4 315.6L772.1 315.6L769.9 315.5L767.6 314.9L765.3 314.3M758.2 189.6L758.6 197.1L758.9 204.5L759.3 215.5L759.8 226.5L760.0 238.2L760.2 250.0L760.5 261.0L760.7 272.0L760.5 280.1L760.3 288.2L760.1 295.6L760.0 303.0L759.5 308.2L759.0 313.5L758.2 315.5L757.4 317.5L756.4 317.3L755.4 317.1L754.4 316.4L753.4 315.7M742.4 190.0L741.9 197.5L741.5 205.0L741.1 216.0L740.6 227.0L740.2 238.7L739.8 250.5L739.7 261.5L739.7 272.5L739.4 280.6L739.1 288.7L739.2 296.1L739.2 303.5L739.4 308.7L739.5 314.0L739.8 316.0L740.0 318.0L740.3 317.7L740.6 317.5L740.9 316.7L741.2 316.0M726.6 189.0L725.4 196.4L724.2 203.9L722.9 214.8L721.6 225.7L720.6 237.4L719.6 249.2L719.2 260.1L718.7 271.1L718.4 279.2L718.1 287.4L718.4 294.7L718.7 302.1L719.4 307.4L720.2 312.7L721.4 314.8L722.7 316.9L724.3 316.7L725.9 316.5L727.5 315.9L729.1 315.2M711.5 186.6L709.5 193.9L707.6 201.3L705.4 212.1L703.3 222.9L701.7 234.5L700.1 246.1L699.4 257.1L698.6 268.0L698.3 276.1L697.9 284.2L698.4 291.6L698.9 299.1L700.2 304.4L701.5 309.8L703.8 312.0L706.1 314.3L708.9 314.3L711.8 314.3L714.6 313.9L717.4 313.4M697.4 183.0L694.7 190.1L692.1 197.3L689.2 207.9L686.2 218.5L684.1 230.0L682.0 241.5L680.9 252.3L679.9 263.1L679.5 271.2L679.1 279.4L679.8 286.8L680.4 294.3L682.3 299.8L684.2 305.3L687.4 307.8L690.6 310.3L694.6 310.6L698.6 310.9L702.6 310.8L706.6 310.6M684.8 178.2L681.5 185.1L678.2 192.0L674.6 202.3L671.0 212.7L668.4 224.0L665.8 235.3L664.4 246.0L663.1 256.8L662.7 264.8L662.2 272.9L663.1 280.5L663.9 288.0L666.3 293.7L668.6 299.4L672.7 302.2L676.7 305.0L681.8 305.7L686.8 306.4L691.8 306.7L696.9 306.9M674.0 172.3L670.2 179.0L666.4 185.6L662.2 195.6L658.0 205.6L655.0 216.7L651.9 227.8L650.4 238.4L648.8 249.0L648.3 257.1L647.9 265.2L648.9 272.8L649.9 280.4L652.6 286.3L655.4 292.3L660.1 295.4L664.9 298.6L670.8 299.8L676.8 301.0L682.7 301.7L688.6 302.4M665.4 165.7L661.2 172.0L657.0 178.2L652.3 187.9L647.6 197.6L644.3 208.4L640.9 219.2L639.1 229.7L637.4 240.1L636.9 248.2L636.4 256.2L637.5 264.0L638.6 271.7L641.7 277.9L644.8 284.0L650.2 287.6L655.5 291.2L662.1 293.0L668.7 294.8L675.4 296.0L682.0 297.3M659.3 158.3L654.8 164.3L650.2 170.2L645.2 179.5L640.2 188.7L636.6 199.3L633.0 209.8L631.1 220.1L629.2 230.4L628.7 238.4L628.3 246.5L629.4 254.3L630.6 262.1L634.0 268.6L637.3 275.0L643.0 279.1L648.7 283.2L655.9 285.6L663.0 287.9L670.2 289.8L677.3 291.6M655.8 150.6L651.1 156.2L646.4 161.7L641.2 170.5L636.0 179.4L632.3 189.6L628.6 199.8L626.6 210.0L624.6 220.1L624.1 228.1L623.6 236.1L624.8 244.1L626.1 252.0L629.5 258.7L633.0 265.5L639.0 270.1L644.9 274.7L652.3 277.7L659.8 280.7L667.2 283.2L674.6 285.7" stroke="#808080" stroke-width="0.7" fill="none"/></g><ellipse cx="746" cy="144.5" rx="91" ry="45.5" fill="url(#tlid)" stroke="#8a8a8a" stroke-width="0.8"/><path d="M659.5 145.0L659.8 141.6L660.6 138.2L661.9 134.8L663.8 131.5L666.2 128.3L669.0 125.1L672.4 122.1L676.2 119.3L680.5 116.6L685.1 114.1L690.2 111.7L695.6 109.6L701.3 107.7L707.3 106.0L713.5 104.6L720.0 103.4L726.6 102.5L733.3 101.8L740.1 101.4L747.0 101.2L753.9 101.4L760.7 101.8L767.4 102.5L774.0 103.4L780.5 104.6L786.7 106.0L792.7 107.7L798.4 109.6L803.8 111.7L808.9 114.1L813.5 116.6L817.8 119.3L821.6 122.1L825.0 125.1L827.8 128.3L830.2 131.5L832.1 134.8L833.4 138.2L834.2 141.6L834.5 145.0" stroke="#585858" stroke-width="2.6" fill="none"/><path d="M826.5 141.5L826.1 145.7L824.8 149.8L822.6 153.9L819.6 157.8L815.8 161.5L811.2 165.0L806.0 168.3L800.0 171.2L793.5 173.9L786.5 176.1L779.0 178.0L771.2 179.5L763.1 180.6L754.9 181.3L746.5 181.5L738.1 181.3L729.9 180.6L721.8 179.5L714.0 178.0L706.5 176.1L699.5 173.9L693.0 171.2L687.0 168.3L681.8 165.0L677.2 161.5L673.4 157.8L670.4 153.9L668.2 149.8L666.9 145.7L666.5 141.5L666.9 137.3L668.2 133.2L670.4 129.1L673.4 125.2L677.2 121.5L681.8 118.0L687.0 114.7L693.0 111.8L699.5 109.1L706.5 106.9L714.0 105.0L721.8 103.5L729.9 102.4L738.1 101.7L746.5 101.5L754.9 101.7L763.1 102.4L771.2 103.5L779.0 105.0L786.5 106.9L793.5 109.1L800.0 111.8L806.0 114.7L811.2 118.0L815.8 121.5L819.6 125.2L822.6 129.1L824.8 133.2L826.1 137.3L826.5 141.5M814.5 139.5L814.1 143.1L813.0 146.6L811.2 150.0L808.6 153.3L805.4 156.5L801.5 159.5L797.0 162.3L792.0 164.8L786.5 167.0L780.5 168.9L774.2 170.6L767.5 171.8L760.6 172.8L753.6 173.3L746.5 173.5L739.4 173.3L732.4 172.8L725.5 171.8L718.8 170.6L712.5 168.9L706.5 167.0L701.0 164.8L696.0 162.3L691.5 159.5L687.6 156.5L684.4 153.3L681.8 150.0L680.0 146.6L678.9 143.1L678.5 139.5L678.9 135.9L680.0 132.4L681.8 129.0L684.4 125.7L687.6 122.5L691.5 119.5L696.0 116.7L701.0 114.2L706.5 112.0L712.5 110.1L718.8 108.4L725.5 107.2L732.4 106.2L739.4 105.7L746.5 105.5L753.6 105.7L760.6 106.2L767.5 107.2L774.2 108.4L780.5 110.1L786.5 112.0L792.0 114.2L797.0 116.7L801.5 119.5L805.4 122.5L808.6 125.7L811.2 129.0L813.0 132.4L814.1 135.9L814.5 139.5M801.5 137.8L801.2 140.7L800.3 143.5L798.8 146.3L796.7 149.0L794.1 151.6L791.0 154.0L787.4 156.2L783.3 158.2L778.8 160.0L774.0 161.6L768.9 162.9L763.5 164.0L757.9 164.7L752.2 165.1L746.5 165.3L740.8 165.1L735.1 164.7L729.5 164.0L724.1 162.9L719.0 161.6L714.2 160.0L709.7 158.2L705.6 156.2L702.0 154.0L698.9 151.6L696.3 149.0L694.2 146.3L692.7 143.5L691.8 140.7L691.5 137.8L691.8 134.9L692.7 132.1L694.2 129.3L696.3 126.6L698.9 124.1L702.0 121.6L705.6 119.4L709.7 117.4L714.2 115.6L719.0 114.0L724.1 112.7L729.5 111.6L735.1 110.9L740.8 110.5L746.5 110.3L752.2 110.5L757.9 110.9L763.5 111.6L768.9 112.7L774.0 114.0L778.8 115.6L783.3 117.4L787.4 119.4L791.0 121.6L794.1 124.1L796.7 126.6L798.8 129.3L800.3 132.1L801.2 134.9L801.5 137.8M788.5 136.5L788.3 138.7L787.6 140.9L786.4 143.0L784.9 145.0L782.9 147.0L780.5 148.8L777.7 150.6L774.6 152.1L771.2 153.5L767.5 154.7L763.6 155.7L759.5 156.5L755.2 157.0L750.9 157.4L746.5 157.5L742.1 157.4L737.8 157.0L733.5 156.5L729.4 155.7L725.5 154.7L721.8 153.5L718.4 152.1L715.3 150.6L712.5 148.8L710.1 147.0L708.1 145.0L706.6 143.0L705.4 140.9L704.7 138.7L704.5 136.5L704.7 134.3L705.4 132.1L706.6 130.0L708.1 128.0L710.1 126.0L712.5 124.2L715.3 122.4L718.4 120.9L721.8 119.5L725.5 118.3L729.4 117.3L733.5 116.5L737.8 116.0L742.1 115.6L746.5 115.5L750.9 115.6L755.2 116.0L759.5 116.5L763.6 117.3L767.5 118.3L771.2 119.5L774.6 120.9L777.7 122.4L780.5 124.2L782.9 126.0L784.9 128.0L786.4 130.0L787.6 132.1L788.3 134.3L788.5 136.5M775.5 135.5L775.3 137.0L774.9 138.5L774.1 140.0L773.0 141.4L771.6 142.8L770.0 144.0L768.1 145.2L765.9 146.3L763.5 147.2L761.0 148.1L758.3 148.7L755.5 149.3L752.5 149.7L749.5 149.9L746.5 150.0L743.5 149.9L740.5 149.7L737.5 149.3L734.7 148.7L732.0 148.1L729.5 147.2L727.1 146.3L724.9 145.2L723.0 144.0L721.4 142.8L720.0 141.4L718.9 140.0L718.1 138.5L717.7 137.0L717.5 135.5L717.7 134.0L718.1 132.5L718.9 131.0L720.0 129.6L721.4 128.2L723.0 127.0L724.9 125.8L727.1 124.7L729.5 123.8L732.0 122.9L734.7 122.3L737.5 121.7L740.5 121.3L743.5 121.1L746.5 121.0L749.5 121.1L752.5 121.3L755.5 121.7L758.3 122.3L761.0 122.9L763.5 123.8L765.9 124.7L768.1 125.8L770.0 127.0L771.6 128.2L773.0 129.6L774.1 131.0L774.9 132.5L775.3 134.0L775.5 135.5M765.5 135.0L765.4 136.0L765.1 137.0L764.6 137.9L763.9 138.9L763.0 139.8L761.9 140.6L760.6 141.4L759.2 142.1L757.7 142.7L756.0 143.2L754.2 143.7L752.4 144.0L750.5 144.3L748.5 144.4L746.5 144.5L744.5 144.4L742.5 144.3L740.6 144.0L738.8 143.7L737.0 143.2L735.3 142.7L733.8 142.1L732.4 141.4L731.1 140.6L730.0 139.8L729.1 138.9L728.4 137.9L727.9 137.0L727.6 136.0L727.5 135.0L727.6 134.0L727.9 133.0L728.4 132.1L729.1 131.1L730.0 130.2L731.1 129.4L732.4 128.6L733.8 127.9L735.3 127.3L737.0 126.8L738.8 126.3L740.6 126.0L742.5 125.7L744.5 125.6L746.5 125.5L748.5 125.6L750.5 125.7L752.4 126.0L754.2 126.3L756.0 126.8L757.7 127.3L759.2 127.9L760.6 128.6L761.9 129.4L763.0 130.2L763.9 131.1L764.6 132.1L765.1 133.0L765.4 134.0L765.5 135.0M834.4 145.7L826.4 143.5L814.4 141.2L801.4 139.2L788.4 137.5L775.5 136.2L765.5 135.5L756.5 135.0M831.2 155.4L823.5 152.3L812.0 148.7L799.4 145.3L786.9 142.2L774.4 139.4L764.8 137.6L756.1 136.2M823.8 164.5L816.8 160.6L806.2 155.8L794.8 151.0L783.4 146.5L772.0 142.4L763.2 139.5L755.3 137.2M812.5 172.6L806.5 168.0L797.5 162.0L787.7 156.0L778.0 150.4L768.2 145.1L760.7 141.3L754.0 138.1M797.9 179.2L793.2 174.0L786.2 167.1L778.6 160.1L771.0 153.6L763.4 147.3L757.6 142.7L752.3 138.9M780.7 184.0L777.6 178.4L772.9 170.8L767.9 163.1L762.8 155.9L757.8 148.9L753.9 143.8L750.4 139.4M761.8 186.8L760.4 180.9L758.3 173.0L756.0 164.9L753.8 157.2L751.5 149.8L749.8 144.4L748.2 139.7M742.1 187.4L742.5 181.5L743.1 173.5L743.8 165.3L744.4 157.5L745.1 150.0L745.6 144.5L746.0 139.8M722.7 185.9L724.8 180.0L728.1 172.2L731.6 164.3L735.1 156.7L738.6 149.5L741.4 144.1L743.8 139.6M704.4 182.1L708.2 176.6L714.0 169.4L720.2 161.9L726.4 154.9L732.6 148.2L737.4 143.3L741.7 139.2M688.3 176.5L693.6 171.5L701.5 165.0L710.1 158.4L718.7 152.2L727.3 146.4L733.9 142.1L739.9 138.5M675.0 169.2L681.5 164.8L691.3 159.3L701.8 153.8L712.4 148.8L723.0 144.0L731.1 140.5L738.4 137.7M665.4 160.6L672.8 157.0L683.8 152.7L695.8 148.5L707.8 144.7L719.8 141.1L729.0 138.7L737.3 136.7M659.8 151.1L667.7 148.4L679.5 145.4L692.3 142.6L705.1 140.1L717.9 138.0L727.8 136.6L736.7 135.7M658.6 141.3L666.6 139.5L678.6 137.8L691.6 136.4L704.6 135.5L717.5 134.8L727.5 134.5L736.5 134.6M661.8 131.6L669.5 130.7L681.0 130.3L693.6 130.3L706.1 130.8L718.6 131.6L728.2 132.4L736.9 133.4M669.2 122.5L676.2 122.4L686.8 123.2L698.2 124.6L709.6 126.5L721.0 128.6L729.8 130.5L737.7 132.4M680.5 114.4L686.5 115.0L695.5 117.0L705.3 119.6L715.0 122.6L724.8 125.9L732.3 128.7L739.0 131.5M695.1 107.8L699.8 109.0L706.8 111.9L714.4 115.5L722.0 119.4L729.6 123.7L735.4 127.3L740.7 130.7M712.3 103.0L715.4 104.6L720.1 108.2L725.1 112.5L730.2 117.1L735.2 122.1L739.1 126.2L742.6 130.2M731.2 100.2L732.6 102.1L734.7 106.0L737.0 110.7L739.2 115.8L741.5 121.2L743.2 125.6L744.8 129.9M750.9 99.6L750.5 101.5L749.9 105.5L749.2 110.3L748.6 115.5L747.9 121.0L747.4 125.5L747.0 129.8M770.3 101.1L768.2 103.0L764.9 106.8L761.4 111.3L757.9 116.3L754.4 121.5L751.6 125.9L749.2 130.0M788.6 104.9L784.8 106.4L779.0 109.6L772.8 113.7L766.6 118.1L760.4 122.8L755.6 126.7L751.3 130.4M804.7 110.5L799.4 111.5L791.5 114.0L782.9 117.2L774.3 120.8L765.7 124.6L759.1 127.9L753.1 131.1M818.0 117.8L811.5 118.2L801.7 119.7L791.2 121.8L780.6 124.2L770.0 127.0L761.9 129.5L754.6 131.9M827.6 126.4L820.2 126.0L809.2 126.3L797.2 127.1L785.2 128.3L773.2 129.9L764.0 131.3L755.7 132.9M833.2 135.9L825.3 134.6L813.5 133.6L800.7 133.0L787.9 132.9L775.1 133.0L765.2 133.4L756.3 133.9" stroke="#808080" stroke-width="0.7" fill="none"/><ellipse cx="747" cy="145" rx="87.5" ry="43.75" fill="none" stroke="#6c6c6c" stroke-width="1"/><ellipse cx="746.5" cy="146.5" rx="91.5" ry="46.5" fill="none" stroke="#8a8a8a" stroke-width="0.8"/><path d="M738 128L760 128L760.5 137.5Q749 140 737.5 137.5Z" fill="#999" stroke="#747474" stroke-width="0.6"/><path d="M741 129V138.5M744.5 129V139M748 129V139.5M751.5 129V139.5M755 129V139M758.5 129V138.5" stroke="#7a7a7a" stroke-width="0.6"/><ellipse cx="750" cy="109" rx="22.5" ry="9.5" fill="#b9b9b9"/><path d="M728.5 116Q733 126 739 129.5Q748.5 135 760 129.5Q766 126 771.5 116Q760 121 750 121Q740 121 728.5 116Z" fill="#5a5a5a"/><path d="M735 124Q749 130 765 124M740 129V133M749 131V135M757 129V133" stroke="#6a6a6a" stroke-width="0.5" fill="none"/><path d="M750 108L772.5 109.0M750 108L771.1 112.2M750 108L767.2 115.1M750 108L761.2 117.2M750 108L753.9 118.4M750 108L746.1 118.4M750 108L738.8 117.2M750 108L732.8 115.1M750 108L728.9 112.2M750 108L727.5 109.0M750 108L728.9 105.8M750 108L732.8 102.9M750 108L738.8 100.8M750 108L746.1 99.6M750 108L753.9 99.6M750 108L761.2 100.8M750 108L767.2 102.9M750 108L771.1 105.8M735 109A15 6 0 1 0 765 109A15 6 0 1 0 735 109" stroke="#8c8c8c" stroke-width="0.5" fill="none"/><clipPath id="sclip"><path d="M797.6 278.6C797.9 274.4 799.1 266.9 801.7 261.9C804.3 256.9 808.9 251.7 813.4 248.5C817.9 245.3 822.9 242.5 828.5 242.6C834.1 242.7 841.9 250.4 846.9 249.3C851.9 248.2 854.7 240.1 858.6 236.0C862.5 231.9 866.7 227.4 870.3 225.0C873.9 222.6 875.8 221.7 880.3 221.4C884.8 221.1 892.0 221.1 897.0 223.4C902.0 225.7 908.4 232.3 910.4 235.1C912.4 237.9 911.6 238.9 908.8 240.0C906.0 241.1 898.2 241.2 893.7 241.8C889.2 242.4 884.8 241.3 882.0 243.5C879.2 245.7 878.7 250.6 877.0 255.0C875.3 259.4 874.8 264.7 872.0 270.0C869.2 275.3 864.5 282.8 860.3 287.0C856.1 291.2 851.9 293.4 846.9 295.3C841.9 297.2 835.8 298.7 830.2 298.7C824.6 298.7 818.4 297.2 813.4 295.3C808.4 293.4 802.6 289.8 800.0 287.0C797.4 284.2 797.3 282.8 797.6 278.6Z"/></clipPath><defs><pattern id="spat" width="2.8" height="2.8" patternUnits="userSpaceOnUse" patternTransform="rotate(30)"><path d="M0 0H2.8V2.8H0Z M1.4 0.35A1.05 1.05 0 1 0 1.4 2.45A1.05 1.05 0 1 0 1.4 0.35Z" fill="#f0a028" fill-rule="evenodd"/></pattern></defs><path d="M797.6 278.6C797.9 274.4 799.1 266.9 801.7 261.9C804.3 256.9 808.9 251.7 813.4 248.5C817.9 245.3 822.9 242.5 828.5 242.6C834.1 242.7 841.9 250.4 846.9 249.3C851.9 248.2 854.7 240.1 858.6 236.0C862.5 231.9 866.7 227.4 870.3 225.0C873.9 222.6 875.8 221.7 880.3 221.4C884.8 221.1 892.0 221.1 897.0 223.4C902.0 225.7 908.4 232.3 910.4 235.1C912.4 237.9 911.6 238.9 908.8 240.0C906.0 241.1 898.2 241.2 893.7 241.8C889.2 242.4 884.8 241.3 882.0 243.5C879.2 245.7 878.7 250.6 877.0 255.0C875.3 259.4 874.8 264.7 872.0 270.0C869.2 275.3 864.5 282.8 860.3 287.0C856.1 291.2 851.9 293.4 846.9 295.3C841.9 297.2 835.8 298.7 830.2 298.7C824.6 298.7 818.4 297.2 813.4 295.3C808.4 293.4 802.6 289.8 800.0 287.0C797.4 284.2 797.3 282.8 797.6 278.6Z" fill="#3c3630" opacity="0.45"/><path d="M797.6 278.6C797.9 274.4 799.1 266.9 801.7 261.9C804.3 256.9 808.9 251.7 813.4 248.5C817.9 245.3 822.9 242.5 828.5 242.6C834.1 242.7 841.9 250.4 846.9 249.3C851.9 248.2 854.7 240.1 858.6 236.0C862.5 231.9 866.7 227.4 870.3 225.0C873.9 222.6 875.8 221.7 880.3 221.4C884.8 221.1 892.0 221.1 897.0 223.4C902.0 225.7 908.4 232.3 910.4 235.1C912.4 237.9 911.6 238.9 908.8 240.0C906.0 241.1 898.2 241.2 893.7 241.8C889.2 242.4 884.8 241.3 882.0 243.5C879.2 245.7 878.7 250.6 877.0 255.0C875.3 259.4 874.8 264.7 872.0 270.0C869.2 275.3 864.5 282.8 860.3 287.0C856.1 291.2 851.9 293.4 846.9 295.3C841.9 297.2 835.8 298.7 830.2 298.7C824.6 298.7 818.4 297.2 813.4 295.3C808.4 293.4 802.6 289.8 800.0 287.0C797.4 284.2 797.3 282.8 797.6 278.6Z" fill="url(#spat)"/><g clip-path="url(#sclip)"><path d="M885 226Q900 226 906 236Q895 240 884 238Z" fill="#d8d8d8" opacity="0.55"/><path d="M808 268Q830 250 850 258Q845 275 822 282Z" fill="#d0d0d0" opacity="0.2"/><path d="M803 262Q825 252 850 258Q862 262 870 262M800 276Q830 268 866 276M808 290Q838 284 862 284M858 238Q880 232 905 236M850 250Q870 246 880 243M818 246Q812 270 818 296M838 244Q830 270 836 298M862 236Q855 262 850 292" stroke="#f5a530" stroke-width="0.9" fill="none"/></g><path d="M797.6 278.6C797.9 274.4 799.1 266.9 801.7 261.9C804.3 256.9 808.9 251.7 813.4 248.5C817.9 245.3 822.9 242.5 828.5 242.6C834.1 242.7 841.9 250.4 846.9 249.3C851.9 248.2 854.7 240.1 858.6 236.0C862.5 231.9 866.7 227.4 870.3 225.0C873.9 222.6 875.8 221.7 880.3 221.4C884.8 221.1 892.0 221.1 897.0 223.4C902.0 225.7 908.4 232.3 910.4 235.1C912.4 237.9 911.6 238.9 908.8 240.0C906.0 241.1 898.2 241.2 893.7 241.8C889.2 242.4 884.8 241.3 882.0 243.5C879.2 245.7 878.7 250.6 877.0 255.0C875.3 259.4 874.8 264.7 872.0 270.0C869.2 275.3 864.5 282.8 860.3 287.0C856.1 291.2 851.9 293.4 846.9 295.3C841.9 297.2 835.8 298.7 830.2 298.7C824.6 298.7 818.4 297.2 813.4 295.3C808.4 293.4 802.6 289.8 800.0 287.0C797.4 284.2 797.3 282.8 797.6 278.6Z" fill="none" stroke="#f5a020" stroke-width="1.1"/><clipPath id="lowbody"><rect x="600" y="235" width="300" height="100"/></clipPath><g clip-path="url(#lowbody)"><path d="M500 -2278.61L1050 -2946.48M500 -2367.46L1050 -3073.88M500 -2467.64L1050 -3217.52M500 -2581.48L1050 -3380.74M500 -2711.95L1050 -3567.82M500 -2863.01L1050 -3784.41M500 -3039.94L1050 -4038.09M500 -3249.99L1050 -4339.27M500 -3503.45L1050 -4702.69M500 -4208.39L1050 -5713.45M500 -4719.17L1050 -6445.81M500 -5409.8L1050 -7436.05M500 -6395.6L1050 -8849.51M500 -7917.2L1050 -11031.22M500 -10574.47L1050 -14841.27M500 -16395.76L1050 -23187.97M500 -39346.7L1050 -56095.55M500 80999.86L1050 116460.05M500 10495.58L1050 15369.43M500 7094.66L1050 10493.11M500 5268.12L1050 7874.18M500 4128.2L1050 6239.75M500 3349L1050 5122.51M500 2782.69L1050 4310.52M500 2352.5L1050 3693.71M500 2014.63L1050 3209.26M500 1742.23L1050 2818.69M500 1330.1L1050 2227.76M500 1170.44L1050 1998.84M500 1033.08L1050 1801.89M500 913.65L1050 1630.65M500 808.86L1050 1480.4M500 716.17L1050 1347.5M500 633.6L1050 1229.1M500 559.57L1050 1122.96M500 492.83L1050 1027.27M500 377.29L1050 861.61M500 326.96L1050 789.43M500 280.76L1050 723.19M500 238.21L1050 662.19M500 198.89L1050 605.82M500 162.46L1050 553.57M500 128.59L1050 505.02M500 97.04L1050 459.77M500 67.56L1050 417.51M500 14.09L1050 340.84M500 -10.24L1050 305.96M500 -33.15L1050 273.1M500 -54.77L1050 242.11M500 -75.19L1050 212.83M500 -94.52L1050 185.11M500 -112.84L1050 158.84M500 -130.23L1050 133.91M500 -146.76L1050 110.21M500 -177.47L1050 66.18M500 -191.76L1050 45.69M500 -205.41L1050 26.12M500 -218.45L1050 7.42M500 -230.93L1050 -10.48M500 -242.89L1050 -27.62M500 -254.35L1050 -44.05M500 -265.34L1050 -59.81M500 -275.9L1050 -74.95M500 -295.8L1050 -103.49M500 -305.19L1050 -116.96M500 -314.24L1050 -129.93M500 -322.96L1050 -142.43M500 -331.37L1050 -154.49M500 -339.49L1050 -166.12M500 -347.32L1050 -177.36M500 -354.9L1050 -188.22M500 -362.22L1050 -198.72M500 -376.16L1050 -218.71M500 -382.8L1050 -228.23M500 -389.23L1050 -237.45M500 -395.47L1050 -246.39M500 -401.52L1050 -255.07M500 -407.39L1050 -263.48M500 -413.08L1050 -271.65M500 -418.62L1050 -279.58M500 -423.99L1050 -287.29M500 -434.29L1050 -302.06M500 -439.24L1050 -309.15M500 -444.04L1050 -316.04M500 -448.72L1050 -322.75M500 -453.28L1050 -329.29M500 -457.72L1050 -335.66M500 -462.05L1050 -341.86M500 -466.27L1050 -347.91M500 -470.38L1050 -353.8M500 -478.31L1050 -365.17M500 -482.13L1050 -370.64M500 -485.85L1050 -375.99M500 -489.5L1050 -381.21M500 -493.05L1050 -386.31M500 -496.53L1050 -391.3M500 -499.93L1050 -396.17M500 -503.25L1050 -400.93M500 -506.5L1050 -405.59M500 -512.78L1050 -414.6M500 -515.82L1050 -418.96M500 -518.8L1050 -423.23M500 -521.71L1050 -427.41M500 -524.57L1050 -431.5M500 -527.36L1050 -435.51M500 -530.1L1050 -439.43M500 -532.78L1050 -443.28M500 -535.41L1050 -447.05M500 -388.31L1050 -504.41M500 -383.86L1050 -500.95M500 -379.31L1050 -497.42M500 -374.66L1050 -493.81M500 -369.91L1050 -490.11M500 -365.05L1050 -486.34M500 -360.07L1050 -482.47M500 -354.98L1050 -478.52M500 -349.77L1050 -474.47M500 -338.97L1050 -466.08M500 -333.37L1050 -461.74M500 -327.64L1050 -457.28M500 -321.76L1050 -452.71M500 -315.73L1050 -448.03M500 -309.54L1050 -443.23M500 -303.2L1050 -438.3M500 -296.68L1050 -433.24M500 -289.99L1050 -428.04M500 -276.07L1050 -417.23M500 -268.81L1050 -411.59M500 -261.35L1050 -405.8M500 -253.68L1050 -399.84M500 -245.78L1050 -393.7M500 -237.65L1050 -387.39M500 -229.28L1050 -380.88M500 -220.65L1050 -374.18M500 -211.75L1050 -367.27M500 -193.11L1050 -352.79M500 -183.34L1050 -345.2M500 -173.24L1050 -337.36M500 -162.81L1050 -329.26M500 -152.02L1050 -320.88M500 -140.86L1050 -312.21M500 -129.3L1050 -303.23M500 -117.33L1050 -293.94M500 -104.92L1050 -284.3M500 -78.7L1050 -263.93M500 -64.83L1050 -253.16M500 -50.41L1050 -241.96M500 -35.41L1050 -230.3M500 -19.79L1050 -218.18M500 -3.52L1050 -205.54M500 13.44L1050 -192.36M500 31.15L1050 -178.61M500 49.65L1050 -164.24M500 89.24L1050 -133.49M500 110.46L1050 -117.01M500 132.73L1050 -99.72M500 156.11L1050 -81.56M500 180.7L1050 -62.46M500 206.59L1050 -42.35M500 233.89L1050 -21.15M500 262.71L1050 1.24M500 293.2L1050 24.92M500 359.76L1050 76.62M500 396.19L1050 104.91M500 434.98L1050 135.04M500 476.39L1050 167.2M500 520.67L1050 201.6M500 568.15L1050 238.47M500 619.17L1050 278.1M500 674.16L1050 320.81M500 733.6L1050 366.98M500 868.15L1050 471.48M500 944.7L1050 530.94M500 1028.64L1050 596.13M500 1121.07L1050 667.93M500 1223.37L1050 747.38M500 1337.2L1050 835.79M500 1464.63L1050 934.76M500 1608.24L1050 1046.31M500 1771.33L1050 1172.98M500 2174.28L1050 1485.95M500 2427.22L1050 1682.4M500 2727.23L1050 1915.42M500 3088.82L1050 2196.26M500 3533.09L1050 2541.33M500 4092.09L1050 2975.5M500 4816.82L1050 3538.4M500 5793.84L1050 4297.24M500 7182.62L1050 5375.9M500 12995.27L1050 9890.56M500 20896.82L1050 16027.65M500 49997.51L1050 38630.02M500 -149555.1L1050 -116361.52M500 -30978.94L1050 -24263.99M500 -17591.57L1050 -13866.09M500 -12431.09L1050 -9857.97M500 -9696.48L1050 -7734.01M500 -8002.72L1050 -6418.48M500 -6016.07L1050 -4875.45M500 -5383.75L1050 -4384.34M500 -4888.08L1050 -3999.35M500 -4489.09L1050 -3689.46M500 -4161L1050 -3434.63M500 -3886.45L1050 -3221.39M500 -3653.33L1050 -3040.33M500 -3452.92L1050 -2884.68M500 -3278.79L1050 -2749.43" stroke="#666" stroke-width="0.8" fill="none" opacity="0.3" clip-path="url(#bclip)"/></g><path d="M519.6 315.7L670 240.4" stroke="#b85040" stroke-width="1.2"/><path d="M826 240.3L846 252.6" stroke="#4a5ab0" stroke-width="1.2"/><path d="M543.4 431.2L553.5 436.7L554.4 450.3L543.7 443.1Z" fill="#585858"/><path d="M543.7 443.1V431.2L553.5 436.7" stroke="#9a9a9a" stroke-width="0.9" fill="none"/><path d="M554.6 438.2V450.3" stroke="#33cc33" stroke-width="1.2"/><path d="M544.2 444L554.4 450.6" stroke="#3a6aff" stroke-width="1.1" stroke-dasharray="1.2 0.6"/><path d="M554.4 450.6L543.7 455.5" stroke="#ee3333" stroke-width="1.1"/><path d="M554.5 428L556.3 431.5L558.3 428M556.3 431.5V436" stroke="#33cc33" stroke-width="0.9" fill="none"/><path d="M543.5 434.3H547.5L543.7 441.5H547.7" stroke="#3a6aff" stroke-width="0.9" fill="none"/><path d="M542.2 447L546.5 452.5M546.5 447L542.2 452.5" stroke="#ee3333" stroke-width="0.9" fill="none"/></svg><svg width="12" height="12" style="left:5px;top:6px"><path d="M3 9A5 5 0 0 1 9 3" stroke="#222" stroke-width="1.5" fill="none"/></svg><div style="position:absolute;left:20px;top:5px;width:76px;height:14px;border-radius:7px;background:rgba(90,90,90,0.75);box-shadow:0 0 0 1px rgba(40,40,40,0.6);color:#e0e0e0;font-size:11px;line-height:14px;text-align:center;white-space:nowrap">Perspective</div><div style="position:absolute;left:100px;top:5px;width:103px;height:14px;border-radius:7px;background:rgba(90,90,90,0.75);box-shadow:0 0 0 1px rgba(40,40,40,0.6);color:#e0e0e0;font-size:11px;line-height:14px;text-align:center;white-space:nowrap">Default</div><div style="position:absolute;left:212.5px;top:5.5px;width:19.5px;height:13.5px;border-radius:6px;background:#4e4e4e;box-shadow:0 0 0 1px rgba(50,50,50,0.7)"></div><div style="position:absolute;left:235.5px;top:5.5px;width:19.5px;height:13.5px;border-radius:6px;background:#4e4e4e;box-shadow:0 0 0 1px rgba(50,50,50,0.7)"></div><div style="position:absolute;left:258.5px;top:5.5px;width:19.5px;height:13.5px;border-radius:6px;background:#4e4e4e;box-shadow:0 0 0 1px rgba(50,50,50,0.7)"></div><div style="position:absolute;left:281.5px;top:5.5px;width:19.5px;height:13.5px;border-radius:6px;background:#4e4e4e;box-shadow:0 0 0 1px rgba(50,50,50,0.7)"></div><div style="position:absolute;left:305px;top:5.5px;width:19.5px;height:13.5px;border-radius:6px;background:#4e4e4e;box-shadow:0 0 0 1px rgba(50,50,50,0.7)"></div><div style="position:absolute;left:327.5px;top:5.5px;width:19.5px;height:13.5px;border-radius:6px;background:#f5a623;box-shadow:0 0 0 1px rgba(50,50,50,0.7)"></div><div style="position:absolute;left:350.5px;top:5.5px;width:19.5px;height:13.5px;border-radius:6px;background:#4e4e4e;box-shadow:0 0 0 1px rgba(50,50,50,0.7)"></div><div style="position:absolute;left:373.5px;top:5.5px;width:19.5px;height:13.5px;border-radius:6px;background:#4e4e4e;box-shadow:0 0 0 1px rgba(50,50,50,0.7)"></div><div style="position:absolute;left:397px;top:5.5px;width:19.5px;height:13.5px;border-radius:6px;background:#4e4e4e;box-shadow:0 0 0 1px rgba(50,50,50,0.7)"></div><svg width="220" height="20" style="left:212px;top:5px" viewBox="728 16 220 20"><path d="M733 19h2v2h-2ZM733 23h2v2h-2ZM733 27h2v2h-2ZM735 21h2v2h-2ZM735 25h2v2h-2ZM737 19h2v2h-2ZM737 23h2v2h-2ZM737 27h2v2h-2ZM739 21h2v2h-2ZM739 25h2v2h-2ZM741 19h2v2h-2ZM741 23h2v2h-2ZM741 27h2v2h-2Z" fill="#eee"/><circle cx="757" cy="20.5" r="2.2" fill="none" stroke="#e0e0e0" stroke-width="1"/><circle cx="757" cy="25.5" r="2.2" fill="none" stroke="#e0e0e0" stroke-width="1"/><circle cx="762" cy="20.5" r="2.2" fill="none" stroke="#e0e0e0" stroke-width="1"/><circle cx="762" cy="25.5" r="2.2" fill="none" stroke="#e0e0e0" stroke-width="1"/><rect x="779.5" y="18.5" width="9" height="9" fill="#888"/><path d="M779.5 18.5L788.5 27.5M788.5 18.5L779.5 27.5" stroke="#ddd" stroke-width="1.5"/><path d="M802 18.5Q803.5 21 802 23Q800.5 25.5 802 28" stroke="#ddd" stroke-width="0.9" fill="none"/><path d="M805 18.5Q806.5 21 805 23Q803.5 25.5 805 28" stroke="#ddd" stroke-width="0.9" fill="none"/><path d="M808 18.5Q809.5 21 808 23Q806.5 25.5 808 28" stroke="#ddd" stroke-width="0.9" fill="none"/><path d="M811 18.5Q812.5 21 811 23Q809.5 25.5 811 28" stroke="#ddd" stroke-width="0.9" fill="none"/><path d="M826 21V27H832V25M828 24V18.5H835V24.5H828" stroke="#ddd" stroke-width="1" fill="none"/><path d="M853.5 18V23.5L848.5 27.5M853.5 23.5L858.5 27.5" stroke="#111" stroke-width="1.3" fill="none"/><path d="M871 27L873.5 25V20H879.5V25L882 27" stroke="#bbb" stroke-width="1" fill="#777"/><path d="M873.5 20L876.5 18L879.5 20" stroke="#bbb" fill="none"/><path d="M897 18L900 20V28L897 26Z" fill="none" stroke="#ccc" stroke-width="1"/><path d="M918 18L921.5 20V28L918 26ZM922.5 18L926 20V28L922.5 26Z" fill="#666" stroke="#ccc" stroke-width="1"/></svg><svg width="100" height="20" style="left:416.7px;top:2.5px" viewBox="0 0 100 20"><circle cx="26.5" cy="7.5" r="4.8" fill="none" stroke="#d8d8d8" stroke-width="1.3"/><path d="M30 11L35 16" stroke="#d8d8d8" stroke-width="1.8"/><path d="M42 16V10.5L47.5 16ZM54 2V7.5L48.5 2Z" fill="#e0b420"/><path d="M44 14L52 4" stroke="#e0b420" stroke-width="1.6"/><path d="M64.00 3.00L65.17 3.12L65.65 5.01L66.40 5.41L68.24 4.76L68.99 5.67L67.99 7.35L68.24 8.16L70.00 9.00L69.88 10.17L67.99 10.65L67.59 11.40L68.24 13.24L67.33 13.99L65.65 12.99L64.84 13.24L64.00 15.00L62.83 14.88L62.35 12.99L61.60 12.59L59.76 13.24L59.01 12.33L60.01 10.65L59.76 9.84L58.00 9.00L58.12 7.83L60.01 7.35L60.41 6.60L59.76 4.76L60.67 4.01L62.35 5.01L63.16 4.76Z" fill="#d8d8d8"/><circle cx="64" cy="9" r="1.68" fill="#333"/><path d="M77.5 4.5V13.5L82.5 9Z" fill="#d8d8d8"/></svg><div style="position:absolute;left:396.4px;top:20.5px;"><svg width="40" height="20" style="left:0;top:0"><path d="M8 3V15M2 9H14" stroke="#d8d8d8" stroke-width="1.6"/><path d="M8 1L5 4H11ZM8 17L5 14H11ZM0 9L3 6V12ZM16 9L13 6V12Z" fill="#d8d8d8"/><path d="M29 4A5.5 5.5 0 1 0 33 8" stroke="#d8d8d8" stroke-width="1.4" fill="none"/><path d="M27 1L31 4L27 7Z" fill="#d8d8d8"/></svg></div><div style="position:absolute;right:12.5px;top:357px;font-size:10.5px;line-height:15px;text-align:right;color:#dde3ee;white-space:nowrap"><span style="color:#f8c038">155 Polygons</span><br>Polygons : Face<br>Channels: 0<br>Deformers: ON<br>GL: 2,882<br>100 mm</div></div><div style="position:absolute;left:1033px;top:0;width:8px;height:658px;background:#444444"></div><div style="position:absolute;left:1033px;top:11px;width:1px;height:451px;background:#1e1e1e"></div><div style="position:absolute;left:1041px;top:0px;width:333px;height:658px;background:#484848"></div><div style="position:absolute;left:1041px;top:0px;width:1px;height:658px;background:#5a5a5a"></div><div style="position:absolute;left:1124px;top:5px;width:22px;height:23px;background:#505050;border-radius:6px;box-shadow:inset 0 0 0 1px #2e2e2e"></div><div style="position:absolute;left:1150px;top:5px;width:45px;height:23px;background:#505050;border-radius:6px;box-shadow:inset 0 0 0 1px #2e2e2e"></div><div style="position:absolute;left:1199px;top:5px;width:68px;height:23px;background:#505050;border-radius:6px;box-shadow:inset 0 0 0 1px #2e2e2e"></div><div style="position:absolute;left:1271px;top:5px;width:22px;height:23px;background:#505050;border-radius:6px;box-shadow:inset 0 0 0 1px #2e2e2e"></div><div style="position:absolute;left:1172px;top:6px;width:1px;height:21px;background:#3a3a3a"></div><div style="position:absolute;left:1222px;top:6px;width:1px;height:21px;background:#3a3a3a"></div><div style="position:absolute;left:1245px;top:6px;width:1px;height:21px;background:#3a3a3a"></div><svg width="200" height="32" style="left:1120px;top:0"><path d="M13 7L20 10.5L13 14L6 10.5Z" fill="#f0d080"/><path d="M6 10.5L13 14V21L6 17.5Z" fill="#c09030"/><path d="M20 10.5L13 14V21L20 17.5Z" fill="#e0b050"/><circle cx="17" cy="18" r="4" fill="none" stroke="#fff" stroke-width="1.5"/><path d="M14 21L10 26" stroke="#fff" stroke-width="2"/><path d="M40 11L46 14.0L40 17L34 14.0Z" fill="#d8d8e0"/><path d="M34 14.0L40 17V23L34 20.0Z" fill="#a8a8b4"/><path d="M46 14.0L40 17V23L46 20.0Z" fill="#c4c4cc"/><path d="M47 8L52 10.5L47 13L42 10.5Z" fill="#d8d8e0"/><path d="M42 10.5L47 13V18L42 15.5Z" fill="#a8a8b4"/><path d="M52 10.5L47 13V18L52 15.5Z" fill="#c4c4cc"/><path d="M62 14L67 16.5L62 19L57 16.5Z" fill="#d8d8e0"/><path d="M57 16.5L62 19V24L57 21.5Z" fill="#a8a8b4"/><path d="M67 16.5L62 19V24L67 21.5Z" fill="#c4c4cc"/><path d="M68 9L73 11.5L68 14L63 11.5Z" fill="#d8d8e0"/><path d="M63 11.5L68 14V19L63 16.5Z" fill="#a8a8b4"/><path d="M73 11.5L68 14V19L73 16.5Z" fill="#c4c4cc"/><path d="M71 14L76 16.5L71 19L66 16.5Z" fill="#d8d8e0"/><path d="M66 16.5L71 19V24L66 21.5Z" fill="#a8a8b4"/><path d="M76 16.5L71 19V24L76 21.5Z" fill="#c4c4cc"/><path d="M89 12L95 15.0L89 18L83 15.0Z" fill="#d8eaff"/><path d="M83 15.0L89 18V24L83 21.0Z" fill="#a0c4e8"/><path d="M95 15.0L89 18V24L95 21.0Z" fill="#bcd8f4"/><path d="M80 8H86V12H80Z" fill="#eee"/><path d="M106 8L112 6L116 12L110 15Z" fill="#c8c8cc"/><circle cx="109" cy="11.5" r="2.5" fill="#cde" stroke="#222"/><path d="M113 19L120 16L123 24L116 27Z" fill="#d0c8a8"/><circle cx="118" cy="22" r="2.5" fill="#cde" stroke="#222"/><path d="M110 14L117 20" stroke="#222"/><path d="M128 12L136 8L146 16L138 22Z" fill="#ddd"/><path d="M133 18L140 12L146 16L138 22Z" fill="#c8c0a0"/><path d="M161 8L169 12.0L161 16L153 12.0Z" fill="#d0e8ff"/><path d="M153 12.0L161 16V24L153 20.0Z" fill="#90b0d0"/><path d="M169 12.0L161 16V24L169 20.0Z" fill="#b0d0f0"/><path d="M163 19H170M167 16L170 19L167 22" stroke="#3c3" stroke-width="2" fill="none"/></svg><div style="position:absolute;left:1042px;top:32px;width:332px;height:20px;background:#2a2a2a"></div><svg width="12" height="12" style="left:1043px;top:36px"><circle cx="6" cy="6" r="4" fill="#111"/><circle cx="5" cy="5" r="2" fill="#333"/></svg><div style="position:absolute;left:1059px;top:37px;width:53px;height:16px;background:#484848;border-radius:6px 6px 0 0;color:#f5a623;font-size:11px;line-height:17px;text-align:center;white-space:nowrap">Scenes</div><div style="position:absolute;left:1116px;top:38px;width:52px;height:15px;background:#3a3a3a;border-radius:6px 6px 0 0;color:#999;font-size:11px;line-height:16px;text-align:center;white-space:nowrap">Shading</div><div style="position:absolute;left:1173px;top:38px;width:52px;height:15px;background:#3a3a3a;border-radius:6px 6px 0 0;color:#999;font-size:11px;line-height:16px;text-align:center;white-space:nowrap">Groups</div><div style="position:absolute;left:1228px;top:37px;font-size:15px;color:#999;font-weight:normal;white-space:nowrap;line-height:1;">+</div><svg width="44" height="16" style="left:1331px;top:35px"><path d="M1 14V9L6 14ZM13 1V6L8 1ZM3 12L11 3" fill="#999" stroke="#999" stroke-width="1.4"/><path d="M23.00 2.00L24.17 2.12L24.65 4.01L25.40 4.41L27.24 3.76L27.99 4.67L26.99 6.35L27.24 7.16L29.00 8.00L28.88 9.17L26.99 9.65L26.59 10.40L27.24 12.24L26.33 12.99L24.65 11.99L23.84 12.24L23.00 14.00L21.83 13.88L21.35 11.99L20.60 11.59L18.76 12.24L18.01 11.33L19.01 9.65L18.76 8.84L17.00 8.00L17.12 6.83L19.01 6.35L19.41 5.60L18.76 3.76L19.67 3.01L21.35 4.01L22.16 3.76Z" fill="#999"/><circle cx="23" cy="8" r="1.68" fill="#333"/><path d="M36 3V13L41 8Z" fill="#999"/></svg><div style="position:absolute;left:1046px;top:57px;width:131px;height:18px;background:#555;border-radius:6px;box-shadow:inset 0 0 0 1px #333;color:#ddd;font-size:11px;line-height:18px;text-align:center;white-space:nowrap;">Add Item&nbsp;&nbsp;&nbsp;&nbsp;&nbsp;&nbsp;</div><div style="position:absolute;left:1158px;top:58px;width:1px;height:16px;background:#333"></div><svg width="10" height="6" style="left:1163px;top:63px"><path d="M0 0H9L4.5 5Z" fill="#ddd"/></svg><div style="position:absolute;left:1211px;top:57px;width:48px;height:18px;background:#555;border-radius:6px;box-shadow:inset 0 0 0 1px #333;color:#ddd;font-size:11px;line-height:18px;text-align:center;white-space:nowrap;">Select</div><div style="position:absolute;left:1263px;top:57px;width:48px;height:18px;background:#555;border-radius:6px;box-shadow:inset 0 0 0 1px #333;color:#ddd;font-size:11px;line-height:18px;text-align:center;white-space:nowrap;">Filter</div><div style="position:absolute;left:1315px;top:57px;width:17px;height:18px;background:#555;border-radius:8px;box-shadow:inset 0 0 0 1px #333;color:#ddd;font-size:11px;line-height:18px;text-align:center;white-space:nowrap;"></div><div style="position:absolute;left:1335px;top:57px;width:17px;height:18px;background:#555;border-radius:8px;box-shadow:inset 0 0 0 1px #333;color:#ddd;font-size:11px;line-height:18px;text-align:center;white-space:nowrap;"></div><div style="position:absolute;left:1355px;top:57px;width:17px;height:18px;background:#555;border-radius:8px;box-shadow:inset 0 0 0 1px #333;color:#ddd;font-size:11px;line-height:18px;text-align:center;white-space:nowrap;"></div><svg width="60" height="20" style="left:1315px;top:57px"><path d="M5 5H13M5 9H13M5 13H13" stroke="#ddd" stroke-width="1.3"/><rect x="24" y="4" width="7" height="10" rx="2" fill="none" stroke="#ddd" stroke-width="1.3"/><path d="M24 7.5H31M24 10.5H31" stroke="#ddd"/><path d="M42 4H54L49.5 10V15L46.5 13V10Z" fill="#ddd"/></svg><div style="position:absolute;left:1045px;top:77px;width:327px;height:328px;background:#585858;border-radius:6px;box-shadow:inset 0 0 0 1px #2c2c2c"></div><div style="position:absolute;left:1046px;top:78px;width:311px;height:18px;background:#5e6976"></div><div style="position:absolute;left:1046px;top:96px;width:311px;height:293px;background:#8e959d"></div><div style="position:absolute;left:1046px;top:132px;width:311px;height:18px;background:#545a63"></div><div style="position:absolute;left:1070px;top:78px;width:1px;height:311px;background:#6c737b"></div><div style="position:absolute;left:1095px;top:78px;width:1px;height:311px;background:#6c737b"></div><div style="position:absolute;left:1120px;top:78px;width:1px;height:311px;background:#6c737b"></div><div style="position:absolute;left:1046px;top:390px;width:311px;height:1px;background:#2c2c2c"></div><div style="position:absolute;left:1046px;top:391px;width:246px;height:13px;background:#5e5e5e;border-radius:0 0 5px 5px;box-shadow:inset 0 -1px 0 #2c2c2c"></div><svg width="8" height="8" style="left:1164px;top:393px"><circle cx="4" cy="4" r="2.5" fill="#666" stroke="#3a3a3a"/></svg><svg width="8" height="8" style="left:1360px;top:230px"><circle cx="4" cy="4" r="2.5" fill="#666" stroke="#3a3a3a"/></svg><svg width="16" height="10" style="left:1050px;top:82px"><path d="M1 5Q8 -2 15 5Q8 12 1 5Z" fill="#eee" stroke="#111" stroke-width="1.2"/><circle cx="8" cy="5" r="2.6" fill="#111"/></svg><svg width="16" height="14" style="left:1075px;top:80px"><path d="M3 2H7V6H3ZM8 1H12V5H8ZM2 7H6V11H2ZM7 6H11V10H7Z" fill="#eee" transform="skewX(-10)"/></svg><svg width="16" height="14" style="left:1100px;top:80px"><path d="M7 2V8" stroke="#3c3" stroke-width="2"/><path d="M7 8L2 11" stroke="#36c" stroke-width="2"/><path d="M7 8L12 11" stroke="#d33" stroke-width="2"/></svg><div style="position:absolute;left:1135px;top:78px;font-size:11px;color:#d4d8dc;font-weight:normal;white-space:nowrap;line-height:18px;">Name</div><svg width="16" height="10" style="left:1050px;top:100px"><path d="M1 5Q8 -2 15 5Q8 12 1 5Z" fill="#eee" stroke="#111" stroke-width="1.2"/><circle cx="8" cy="5" r="2.6" fill="#111"/></svg><svg width="16" height="10" style="left:1050px;top:118px"><path d="M1 5Q8 -2 15 5Q8 12 1 5Z" fill="#eee" stroke="#111" stroke-width="1.2"/><circle cx="8" cy="5" r="2.6" fill="#111"/></svg><svg width="16" height="10" style="left:1050px;top:136px"><path d="M1 5Q8 -2 15 5Q8 12 1 5Z" fill="#eee" stroke="#111" stroke-width="1.2"/><circle cx="8" cy="5" r="2.6" fill="#111"/></svg><svg width="16" height="10" style="left:1050px;top:154px"><path d="M1 5Q8 -2 15 5Q8 12 1 5Z" fill="#eee" stroke="#111" stroke-width="1.2"/><circle cx="8" cy="5" r="2.6" fill="#111"/></svg><svg width="16" height="10" style="left:1050px;top:172px"><path d="M1 5Q8 -2 15 5Q8 12 1 5Z" fill="#eee" stroke="#111" stroke-width="1.2"/><circle cx="8" cy="5" r="2.6" fill="#111"/></svg><svg width="16" height="10" style="left:1050px;top:190px"><path d="M1 5Q8 -2 15 5Q8 12 1 5Z" fill="#eee" stroke="#111" stroke-width="1.2"/><circle cx="8" cy="5" r="2.6" fill="#111"/></svg><svg width="16" height="14" style="left:1075px;top:116px"><path d="M3 2H7V6H3ZM8 1H12V5H8ZM2 7H6V11H2ZM7 6H11V10H7Z" fill="#f5a623" stroke="#5a3a00" stroke-width="0.6" transform="skewX(-10)"/></svg><svg width="80" height="110" style="left:1120px;top:96px" viewBox="1120 96 80 110"><path d="M1128.5 109V196M1129 123.5H1136M1129 159.5H1137M1129 177.5H1137M1129 195.5H1137M1150.5 123V141M1151 141.5H1158" stroke="#3e3e3e" stroke-width="1" stroke-dasharray="1 1" fill="none"/><path d="M1125 103H1132L1128.5 108.5Z" fill="#3a3a3a"/><path d="M1135.5 105.5H1141.5M1138.5 102.5V108.5" stroke="#3a3a3a" stroke-width="1"/><path d="M1147 122.5H1154" stroke="#3a3a3a" stroke-width="1"/><rect x="1136.5" y="158.2" width="2.4" height="2.4" fill="#555"/><rect x="1136.5" y="176.2" width="2.4" height="2.4" fill="#555"/><rect x="1136.5" y="194.2" width="2.4" height="2.4" fill="#555"/><rect x="1158.3" y="140.3" width="2.4" height="2.4" fill="#555"/></svg><svg width="16" height="14" style="left:1145px;top:97px"><path d="M1 6H13V13H1Z" fill="#1a1a1a"/><path d="M1 4L12 1L13 4L2 7Z" fill="#eee" stroke="#111" stroke-width="0.8"/><path d="M4 3.5L5 6M7.5 2.5L8.5 5.5" stroke="#111" stroke-width="1.2"/><path d="M2 8H12" stroke="#666" stroke-width="0.8"/></svg><div style="position:absolute;left:1161px;top:96px;font-size:12px;color:#000;font-weight:bold;white-space:nowrap;line-height:18px;">Untitled*</div><svg width="16" height="16" style="left:1156px;top:115px"><path d="M8 1L15 4V12L8 15L1 12V4Z" fill="#a8bccf" stroke="#4a5a6a" stroke-width="0.8"/><path d="M1 4L8 7L15 4M8 7V15" stroke="#dfe8f0" stroke-width="0.8" fill="none"/></svg><svg width="16" height="16" style="left:1172px;top:115px"><path d="M8.00 2.00L9.17 2.12L9.65 4.01L10.40 4.41L12.24 3.76L12.99 4.67L11.99 6.35L12.24 7.16L14.00 8.00L13.88 9.17L11.99 9.65L11.59 10.40L12.24 12.24L11.33 12.99L9.65 11.99L8.84 12.24L8.00 14.00L6.83 13.88L6.35 11.99L5.60 11.59L3.76 12.24L3.01 11.33L4.01 9.65L3.76 8.84L2.00 8.00L2.12 6.83L4.01 6.35L4.41 5.60L3.76 3.76L4.67 3.01L6.35 4.01L7.16 3.76Z" fill="#38506a"/><circle cx="8" cy="8" r="1.68" fill="#333"/><circle cx="8" cy="8" r="3" fill="#b8c8d8"/></svg><div style="position:absolute;left:1188px;top:114px;font-size:11px;color:#111;font-weight:normal;white-space:nowrap;line-height:18px;">Teapot</div><svg width="16" height="16" style="left:1167px;top:133px"><path d="M8.00 2.00L9.17 2.12L9.65 4.01L10.40 4.41L12.24 3.76L12.99 4.67L11.99 6.35L12.24 7.16L14.00 8.00L13.88 9.17L11.99 9.65L11.59 10.40L12.24 12.24L11.33 12.99L9.65 11.99L8.84 12.24L8.00 14.00L6.83 13.88L6.35 11.99L5.60 11.59L3.76 12.24L3.01 11.33L4.01 9.65L3.76 8.84L2.00 8.00L2.12 6.83L4.01 6.35L4.41 5.60L3.76 3.76L4.67 3.01L6.35 4.01L7.16 3.76Z" fill="#9ab0c8"/><circle cx="8" cy="8" r="1.68" fill="#333"/><circle cx="8" cy="8" r="3" fill="#545a63"/></svg><div style="position:absolute;left:1184px;top:132px;font-size:11px;color:#f5a623;font-weight:normal;white-space:nowrap;line-height:18px;">UV Flip</div><svg width="16" height="16" style="left:1156px;top:151px"><path d="M8 1L15 4V12L8 15L1 12V4Z" fill="#a8bccf" stroke="#4a5a6a" stroke-width="0.8"/><path d="M1 4L8 7L15 4M8 7V15" stroke="#dfe8f0" stroke-width="0.8" fill="none"/></svg><div style="position:absolute;left:1172px;top:150px;font-size:11px;color:#6e757c;font-weight:normal;white-space:nowrap;line-height:18px;">Mesh</div><svg width="16" height="16" style="left:1157px;top:170px"><path d="M1 4H4L5 2H9L10 4H12V11H1Z" fill="#e8e8e8" stroke="#222" stroke-width="0.8"/><circle cx="8.5" cy="8" r="3.6" fill="#111"/><circle cx="8.5" cy="8" r="1.6" fill="#555"/></svg><svg width="16" height="16" style="left:1171px;top:169px"><defs><radialGradient id="sph" cx="0.35" cy="0.35" r="0.7"><stop offset="0" stop-color="#d0d8ff"/><stop offset="0.5" stop-color="#5050c0"/><stop offset="1" stop-color="#101040"/></radialGradient></defs><circle cx="8" cy="8" r="6.5" fill="url(#sph)"/></svg><div style="position:absolute;left:1189px;top:168px;font-size:12px;color:#000;font-weight:bold;white-space:nowrap;line-height:18px;">Camera</div><svg width="16" height="16" style="left:1157px;top:189px"><path d="M1 3L6 1L11 6L6 10Z" fill="#e0e0e0" stroke="#222" stroke-width="0.8"/><path d="M6 10L11 6L12 9L8 12Z" fill="#f4f0a0" stroke="#222" stroke-width="0.8"/></svg><div style="position:absolute;left:1172px;top:186px;font-size:11px;color:#111;font-weight:normal;white-space:nowrap;line-height:18px;">Directional Light</div><svg width="6" height="50" style="left:1035px;top:373px"><path d="M0 1H6" stroke="#2c2c3c" stroke-width="1.2"/><path d="M0 4H6" stroke="#777" stroke-width="1.2"/><path d="M0 7H6" stroke="#2c2c3c" stroke-width="1.2"/><path d="M0 10H6" stroke="#777" stroke-width="1.2"/><path d="M0 13H6" stroke="#2c2c3c" stroke-width="1.2"/><path d="M0 16H6" stroke="#777" stroke-width="1.2"/><path d="M0 19H6" stroke="#2c2c3c" stroke-width="1.2"/><path d="M0 22H6" stroke="#777" stroke-width="1.2"/><path d="M0 25H6" stroke="#2c2c3c" stroke-width="1.2"/><path d="M0 28H6" stroke="#777" stroke-width="1.2"/><path d="M0 31H6" stroke="#2c2c3c" stroke-width="1.2"/><path d="M0 34H6" stroke="#777" stroke-width="1.2"/><path d="M0 37H6" stroke="#2c2c3c" stroke-width="1.2"/><path d="M0 40H6" stroke="#777" stroke-width="1.2"/><path d="M0 43H6" stroke="#2c2c3c" stroke-width="1.2"/><path d="M0 46H6" stroke="#777" stroke-width="1.2"/></svg><div style="position:absolute;left:1042px;top:408px;width:332px;height:20px;background:#2a2a2a"></div><svg width="12" height="12" style="left:1043px;top:414px"><circle cx="6" cy="6" r="4" fill="#111"/><circle cx="5" cy="5" r="2" fill="#333"/></svg><div style="position:absolute;left:1059px;top:413px;width:60px;height:16px;background:#484848;border-radius:6px 6px 0 0;color:#f5a623;font-size:11px;line-height:17px;text-align:center;white-space:nowrap">Properties</div><div style="position:absolute;left:1125px;top:414px;width:56px;height:15px;background:#3a3a3a;border-radius:6px 6px 0 0;color:#999;font-size:11px;line-height:16px;text-align:center;white-space:nowrap">Channels</div><div style="position:absolute;left:1186px;top:414px;width:62px;height:15px;background:#3a3a3a;border-radius:6px 6px 0 0;color:#999;font-size:11px;line-height:16px;text-align:center;white-space:nowrap">Vertex &nbsp;...</div><div style="position:absolute;left:1253px;top:414px;width:52px;height:15px;background:#3a3a3a;border-radius:6px 6px 0 0;color:#999;font-size:11px;line-height:16px;text-align:center;white-space:nowrap">Stats</div><div style="position:absolute;left:1308px;top:413px;font-size:15px;color:#999;font-weight:normal;white-space:nowrap;line-height:1;">+</div><svg width="44" height="16" style="left:1331px;top:412px"><path d="M1 14V9L6 14ZM13 1V6L8 1ZM3 12L11 3" fill="#999" stroke="#999" stroke-width="1.4"/><path d="M23.00 2.00L24.17 2.12L24.65 4.01L25.40 4.41L27.24 3.76L27.99 4.67L26.99 6.35L27.24 7.16L29.00 8.00L28.88 9.17L26.99 9.65L26.59 10.40L27.24 12.24L26.33 12.99L24.65 11.99L23.84 12.24L23.00 14.00L21.83 13.88L21.35 11.99L20.60 11.59L18.76 12.24L18.01 11.33L19.01 9.65L18.76 8.84L17.00 8.00L17.12 6.83L19.01 6.35L19.41 5.60L18.76 3.76L19.67 3.01L21.35 4.01L22.16 3.76Z" fill="#999"/><circle cx="23" cy="8" r="1.68" fill="#333"/><path d="M36 3V13L41 8Z" fill="#999"/></svg><div style="position:absolute;left:1046px;top:434px;width:303px;height:16px;background:#3e3e3e;border-radius:6px"></div><svg width="8" height="8" style="left:1051px;top:438px"><path d="M0 1H7L3.5 7Z" fill="#666"/></svg><div style="position:absolute;left:1061px;top:434px;font-size:11px;color:#ddd;font-weight:normal;white-space:nowrap;line-height:16px;">Mesh Operation</div><div style="position:absolute;left:1159px;top:453px;width:33px;height:19px;background:#545454;border-radius:6px;box-shadow:inset 0 0 0 1px #2c2c2c"></div><svg width="12" height="12" style="left:1163px;top:456px"><circle cx="6" cy="6" r="4.5" fill="#545454" stroke="#444"/></svg><div style="position:absolute;left:1175px;top:454px;width:16px;height:17px;background:#f5a623;border-radius:0 5px 5px 0"></div><svg width="12" height="12" style="left:1178px;top:457px"><path d="M1.5 6.5L3.5 10.5L10.5 3" stroke="#111" stroke-width="2" fill="none"/></svg><div style="position:absolute;left:1196px;top:454px;font-size:11px;color:#ddd;font-weight:normal;white-space:nowrap;line-height:19px;">Enable</div><div style="position:absolute;left:1050px;top:476px;width:299px;height:1px;background:#5e5e5e"></div><div style="position:absolute;left:1050px;top:477px;width:299px;height:1px;background:#363636"></div><div style="position:absolute;left:1159px;top:482px;width:33px;height:19px;background:#545454;border-radius:6px;box-shadow:inset 0 0 0 1px #2c2c2c"></div><svg width="12" height="12" style="left:1163px;top:485px"><circle cx="6" cy="6" r="4.5" fill="#545454" stroke="#444"/></svg><div style="position:absolute;left:1175px;top:483px;width:16px;height:17px;background:#f5a623;border-radius:0 5px 5px 0"></div><svg width="12" height="12" style="left:1178px;top:486px"><path d="M1.5 6.5L3.5 10.5L10.5 3" stroke="#111" stroke-width="2" fill="none"/></svg><div style="position:absolute;left:1196px;top:483px;font-size:11px;color:#ddd;font-weight:normal;white-space:nowrap;line-height:19px;">Use World Transform</div><div style="position:absolute;left:1050px;top:505px;width:299px;height:1px;background:#5e5e5e"></div><div style="position:absolute;left:1050px;top:506px;width:299px;height:1px;background:#363636"></div><div style="position:absolute;left:1100px;top:512px;font-size:11px;color:#ddd;font-weight:normal;white-space:nowrap;line-height:18px;"><div style="width:55px;text-align:right">Name</div></div><div style="position:absolute;left:1159px;top:511px;width:190px;height:19px;background:#5a5a5a;border-radius:6px;box-shadow:inset 0 0 0 1px #2c2c2c"></div><div style="position:absolute;left:1160px;top:512px;width:15px;height:17px;background:#4e4e4e;border-radius:6px 0 0 6px"></div><div style="position:absolute;left:1179px;top:511px;font-size:11px;color:#ddd;font-weight:normal;white-space:nowrap;line-height:19px;">Texture</div><svg width="10" height="6" style="left:1334px;top:518px"><path d="M0 0H9L4.5 5Z" fill="#ddd"/></svg><div style="position:absolute;left:1159px;top:532px;width:33px;height:19px;background:#545454;border-radius:6px;box-shadow:inset 0 0 0 1px #2c2c2c"></div><svg width="12" height="12" style="left:1163px;top:535px"><circle cx="6" cy="6" r="4.5" fill="#bbb" stroke="#222"/></svg><div style="position:absolute;left:1175px;top:533px;width:16px;height:17px;background:#585858;border-radius:0 5px 5px 0"></div><div style="position:absolute;left:1196px;top:532px;font-size:11px;color:#ddd;font-weight:normal;white-space:nowrap;line-height:19px;">Flip per Polygon</div><div style="position:absolute;left:1100px;top:553px;font-size:11px;color:#ddd;font-weight:normal;white-space:nowrap;line-height:19px;"><div style="width:55px;text-align:right">Axis</div></div><div style="position:absolute;left:1159px;top:553px;width:190px;height:19px;background:#5a5a5a;border-radius:6px;box-shadow:inset 0 0 0 1px #2c2c2c"></div><div style="position:absolute;left:1160px;top:554px;width:15px;height:17px;background:#4e4e4e;border-radius:6px 0 0 6px"></div><svg width="12" height="12" style="left:1162px;top:556px"><circle cx="6" cy="6" r="5" fill="#bbb" stroke="#222"/></svg><div style="position:absolute;left:1179px;top:553px;font-size:11px;color:#ddd;font-weight:normal;white-space:nowrap;line-height:19px;">V</div><svg width="10" height="6" style="left:1334px;top:560px"><path d="M0 0H9L4.5 5Z" fill="#ddd"/></svg><div style="position:absolute;left:1351px;top:428px;width:23px;height:230px;background:#3a3a3a"></div><div style="position:absolute;left:1354px;top:433px;width:17px;height:46px;background:#f5a623;border-radius:6px 6px 0 0"></div><div style="position:absolute;left:1354px;top:482px;width:17px;height:88px;background:#454545"></div><div style="position:absolute;left:1354px;top:572px;width:17px;height:86px;background:#454545"></div><div style="position:absolute;left:1355px;top:436px;font-size:11px;color:#222;font-weight:normal;white-space:nowrap;line-height:15px;writing-mode:vertical-rl;">UV Flip</div><div style="position:absolute;left:1355px;top:486px;font-size:11px;color:#bbb;font-weight:normal;white-space:nowrap;line-height:15px;writing-mode:vertical-rl;">Select By Index</div><div style="position:absolute;left:1355px;top:575px;font-size:11px;color:#bbb;font-weight:normal;white-space:nowrap;line-height:15px;writing-mode:vertical-rl;">User Channels</div><div style="position:absolute;left:0px;top:462.5px;width:1033px;height:1.5px;background:#1c1c1c"></div><div style="position:absolute;left:0px;top:464px;width:1033px;height:194px;background:#65707c"></div><div style="position:absolute;left:0px;top:464px;width:1033px;height:1px;background:#76818d"></div><svg width="12" height="12" style="left:5px;top:470px"><path d="M3 9A5 5 0 0 1 9 3" stroke="#2a2f36" stroke-width="1.5" fill="none"/></svg><div style="position:absolute;left:23px;top:471px;width:63px;height:20px;background:#47505b;border-radius:5px;box-shadow:inset 0 0 0 1px #6e7a86;"></div><div style="position:absolute;left:44px;top:472px;width:1px;height:18px;background:#5a646f"></div><div style="position:absolute;left:65px;top:472px;width:1px;height:18px;background:#5a646f"></div><svg width="70" height="20" style="left:23px;top:471px"><rect x="5" y="4" width="6" height="4" fill="#b8f090"/><path d="M5 8H13Q15 10 13 12H5Q3 14 5 16H9" stroke="#fff" stroke-width="1.2" fill="none"/><path d="M13 14V19M10.5 16.5H15.5" stroke="#f5c030" stroke-width="1.5"/><path d="M31.00 3.50L32.07 3.61L32.52 5.34L33.20 5.71L34.89 5.11L35.57 5.94L34.66 7.48L34.88 8.23L36.50 9.00L36.39 10.07L34.66 10.52L34.29 11.20L34.89 12.89L34.06 13.57L32.52 12.66L31.77 12.88L31.00 14.50L29.93 14.39L29.48 12.66L28.80 12.29L27.11 12.89L26.43 12.06L27.34 10.52L27.12 9.77L25.50 9.00L25.61 7.93L27.34 7.48L27.71 6.80L27.11 5.11L27.94 4.43L29.48 5.34L30.23 5.12Z" fill="#b8f090"/><circle cx="31" cy="9" r="1.54" fill="#333"/><path d="M35 14V19M32.5 16.5H37.5" stroke="#f5c030" stroke-width="1.5"/><path d="M51.00 2.50L51.88 2.59L52.24 4.01L52.80 4.31L54.18 3.82L54.74 4.50L53.99 5.76L54.18 6.37L55.50 7.00L55.41 7.88L53.99 8.24L53.69 8.80L54.18 10.18L53.50 10.74L52.24 9.99L51.63 10.18L51.00 11.50L50.12 11.41L49.76 9.99L49.20 9.69L47.82 10.18L47.26 9.50L48.01 8.24L47.82 7.63L46.50 7.00L46.59 6.12L48.01 5.76L48.31 5.20L47.82 3.82L48.50 3.26L49.76 4.01L50.37 3.82Z" fill="#80b060"/><circle cx="51" cy="7" r="1.26" fill="#333"/><path d="M53.00 6.50L53.88 6.59L54.24 8.01L54.80 8.31L56.18 7.82L56.74 8.50L55.99 9.76L56.18 10.37L57.50 11.00L57.41 11.88L55.99 12.24L55.69 12.80L56.18 14.18L55.50 14.74L54.24 13.99L53.63 14.18L53.00 15.50L52.12 15.41L51.76 13.99L51.20 13.69L49.82 14.18L49.26 13.50L50.01 12.24L49.82 11.63L48.50 11.00L48.59 10.12L50.01 9.76L50.31 9.20L49.82 7.82L50.50 7.26L51.76 8.01L52.37 7.82Z" fill="#b8f090"/><circle cx="53" cy="11" r="1.26" fill="#333"/><path d="M56 14V19M53.5 16.5H58.5" stroke="#f5c030" stroke-width="1.5"/></svg><div style="position:absolute;left:92px;top:471px;width:351px;height:20px;background:#47505b;border-radius:5px;box-shadow:inset 0 0 0 1px #6e7a86;"></div><div style="position:absolute;left:391px;top:472px;width:1px;height:18px;background:#5a646f"></div><div style="position:absolute;left:98px;top:471px;font-size:11px;color:#eee;font-weight:normal;white-space:nowrap;line-height:20px;">Workspace: Workspace</div><svg width="10" height="6" style="left:377px;top:479px"><path d="M0 0H9L4.5 5Z" fill="#eee"/></svg><svg width="30" height="12" style="left:403px;top:475px"><path d="M1 2H8V5H1ZM11 2H18V5H11ZM21 2H28V5H21ZM1 8H8V11H1ZM11 8H18V11H11ZM21 8H28V11H21Z" fill="none" stroke="#fff" stroke-width="1.3"/></svg><div style="position:absolute;left:449px;top:471px;width:84px;height:20px;background:#47505b;border-radius:5px;box-shadow:inset 0 0 0 1px #6e7a86;"></div><div style="position:absolute;left:470px;top:472px;width:1px;height:18px;background:#5a646f"></div><div style="position:absolute;left:491px;top:472px;width:1px;height:18px;background:#5a646f"></div><div style="position:absolute;left:512px;top:472px;width:1px;height:18px;background:#5a646f"></div><svg width="84" height="20" style="left:449px;top:471px"><rect x="8" y="4" width="3" height="3" fill="#fff"/><rect x="4" y="12" width="3" height="3" fill="#fff"/><rect x="12" y="12" width="3" height="3" fill="#fff"/><path d="M9.5 7V10M5.5 10H13.5V12M5.5 10V12" stroke="#fff" stroke-width="1" fill="none"/><path d="M25 10L30 5V8H36V12H30V15Z" fill="#77808a"/><path d="M52 3L57 8H54V16H50V8H47Z" fill="#fff" stroke="#222" stroke-width="0.6"/><path d="M73 17L68 12H71V4H75V12H78Z" fill="#77808a"/></svg><div style="position:absolute;left:539px;top:471px;width:228px;height:20px;background:#47505b;border-radius:5px;box-shadow:inset 0 0 0 1px #6e7a86;"></div><div style="position:absolute;left:638px;top:472px;width:1px;height:18px;background:#5a646f"></div><div style="position:absolute;left:739px;top:472px;width:1px;height:18px;background:#5a646f"></div><div style="position:absolute;left:545px;top:471px;font-size:11px;color:#ddd;font-weight:normal;white-space:nowrap;line-height:20px;">Add Selected</div><div style="position:absolute;left:645px;top:471px;font-size:11px;color:#ddd;font-weight:normal;white-space:nowrap;line-height:20px;">Add...</div><svg width="10" height="6" style="left:747px;top:479px"><path d="M0 0H9L4.5 5Z" fill="#eee"/></svg><div style="position:absolute;left:774px;top:471px;width:101px;height:20px;background:#47505b;border-radius:5px;box-shadow:inset 0 0 0 1px #6e7a86;"></div><div style="position:absolute;left:781px;top:471px;font-size:11px;color:#ddd;font-weight:normal;white-space:nowrap;line-height:20px;">Select Backdrop</div><svg width="100" height="20" style="left:932.5px;top:467.7px" viewBox="0 0 100 20"><path d="M7 3.5V14.5M1.5 9H12.5" stroke="#e8e8e8" stroke-width="1.6"/><path d="M7 1L4 4.5H10ZM7 17L4 13.5H10ZM-1 9L2.5 6V12ZM15 9L11.5 6V12Z" fill="#e8e8e8"/><circle cx="26.5" cy="7.5" r="4.8" fill="none" stroke="#e8e8e8" stroke-width="1.3"/><path d="M30 11L35 16" stroke="#e8e8e8" stroke-width="1.8"/><path d="M42 16V10.5L47.5 16ZM54 2V7.5L48.5 2Z" fill="#e8e8e8"/><path d="M44 14L52 4" stroke="#e8e8e8" stroke-width="1.6"/><path d="M64.00 3.00L65.17 3.12L65.65 5.01L66.40 5.41L68.24 4.76L68.99 5.67L67.99 7.35L68.24 8.16L70.00 9.00L69.88 10.17L67.99 10.65L67.59 11.40L68.24 13.24L67.33 13.99L65.65 12.99L64.84 13.24L64.00 15.00L62.83 14.88L62.35 12.99L61.60 12.59L59.76 13.24L59.01 12.33L60.01 10.65L59.76 9.84L58.00 9.00L58.12 7.83L60.01 7.35L60.41 6.60L59.76 4.76L60.67 4.01L62.35 5.01L63.16 4.76Z" fill="#e8e8e8"/><circle cx="64" cy="9" r="1.68" fill="#333"/><path d="M77.5 4.5V13.5L82.5 9Z" fill="#e8e8e8"/></svg><div style="position:absolute;left:23px;top:497px;width:83px;height:20px;background:#47505b;border-radius:5px;box-shadow:inset 0 0 0 1px #6e7a86;"></div><div style="position:absolute;left:23px;top:497px;width:43px;height:20px;background:#d09540;border-radius:5px 0 0 5px;box-shadow:inset 0 0 0 1px #2a2a2a"></div><div style="position:absolute;left:44px;top:498px;width:1px;height:18px;background:#a07030"></div><div style="position:absolute;left:86px;top:498px;width:1px;height:18px;background:#5a646f"></div><svg width="84" height="20" style="left:23px;top:497px"><path d="M10 5L15 10L10 15L5 10Z" fill="#f0a0c8"/><circle cx="31" cy="10" r="5" fill="#f0e0c0"/><path d="M48 3L51 6L48 9L45 6ZM55 3L58 6L55 9L52 6ZM48 11L51 14L48 17L45 14ZM55 11L58 14L55 17L52 14Z" fill="#a898b0"/><path d="M67 6H78M67 10H78M67 14H78" stroke="#2a2f36" stroke-width="1.5"/><path d="M67 10H78" stroke="#bbb" stroke-width="1.2"/></svg><div style="position:absolute;left:311px;top:538px;width:181px;height:20px;background:#414853;border-radius:7px;box-shadow:inset 0 0 0 1.5px #7f8892"></div><svg width="10" height="10" style="left:321px;top:544px"><path d="M0 1H9L4.5 9Z" fill="#d0d0d0"/></svg><svg width="14" height="14" style="left:347px;top:541px"><path d="M7.00 1.00L8.17 1.12L8.65 3.01L9.40 3.41L11.24 2.76L11.99 3.67L10.99 5.35L11.24 6.16L13.00 7.00L12.88 8.17L10.99 8.65L10.59 9.40L11.24 11.24L10.33 11.99L8.65 10.99L7.84 11.24L7.00 13.00L5.83 12.88L5.35 10.99L4.60 10.59L2.76 11.24L2.01 10.33L3.01 8.65L2.76 7.84L1.00 7.00L1.12 5.83L3.01 5.35L3.41 4.60L2.76 2.76L3.67 2.01L5.35 3.01L6.16 2.76Z" fill="#d8c040"/><circle cx="7" cy="7" r="1.68" fill="#333"/><circle cx="7" cy="7" r="3" fill="#414853"/></svg><div style="position:absolute;left:361px;top:538px;font-size:11px;color:#e0e0e0;font-weight:normal;white-space:nowrap;line-height:20px;">Select By Index</div><div style="position:absolute;left:311px;top:598px;width:181px;height:20px;background:#414853;border-radius:7px;box-shadow:inset 0 0 0 1.5px #7f8892"></div><svg width="10" height="10" style="left:321px;top:604px"><path d="M0 1H9L4.5 9Z" fill="#d0d0d0"/></svg><svg width="14" height="14" style="left:347px;top:601px"><path d="M7 1L13 3.5V10.5L7 13L1 10.5V3.5Z" fill="#8aa0b8" stroke="#2a3a4a" stroke-width="0.8"/><path d="M1 3.5L7 6L13 3.5M7 6V13" stroke="#d0dde8" stroke-width="0.8" fill="none"/></svg><div style="position:absolute;left:361px;top:598px;font-size:11px;color:#e0e0e0;font-weight:normal;white-space:nowrap;line-height:20px;">Teapot</div><div style="position:absolute;left:550px;top:537px;width:182px;height:62px;background:#414853;border-radius:7px;box-shadow:inset 0 0 0 1.5px #e89a30"></div><div style="position:absolute;left:551px;top:557px;width:180px;height:1px;background:#e89a30"></div><div style="position:absolute;left:551px;top:578px;width:180px;height:1px;background:#6a6050"></div><svg width="10" height="10" style="left:561px;top:543px"><path d="M0 1H9L4.5 9Z" fill="#d0d0d0"/></svg><svg width="14" height="14" style="left:587px;top:540px"><path d="M7.00 1.00L8.17 1.12L8.65 3.01L9.40 3.41L11.24 2.76L11.99 3.67L10.99 5.35L11.24 6.16L13.00 7.00L12.88 8.17L10.99 8.65L10.59 9.40L11.24 11.24L10.33 11.99L8.65 10.99L7.84 11.24L7.00 13.00L5.83 12.88L5.35 10.99L4.60 10.59L2.76 11.24L2.01 10.33L3.01 8.65L2.76 7.84L1.00 7.00L1.12 5.83L3.01 5.35L3.41 4.60L2.76 2.76L3.67 2.01L5.35 3.01L6.16 2.76Z" fill="#e0a020"/><circle cx="7" cy="7" r="1.68" fill="#333"/><circle cx="7" cy="7" r="3" fill="#414853"/></svg><div style="position:absolute;left:602px;top:537px;font-size:11px;color:#f5a623;font-weight:normal;white-space:nowrap;line-height:20px;">UV Flip</div><svg width="10" height="10" style="left:562px;top:563px"><path d="M1 0V9L9 4.5Z" fill="#c8c8c8"/></svg><svg width="10" height="10" style="left:562px;top:583px"><path d="M1 0V9L9 4.5Z" fill="#c8c8c8"/></svg><div style="position:absolute;left:555px;top:558px;font-size:11px;color:#ddd;font-weight:normal;white-space:nowrap;line-height:20px;"><div style="width:180px;text-align:center">Selection</div></div><div style="position:absolute;left:555px;top:578px;font-size:11px;color:#ddd;font-weight:normal;white-space:nowrap;line-height:20px;"><div style="width:180px;text-align:center">Geometry</div></div><svg width="1033" height="195" style="left:0;top:463px" viewBox="0 463 1033 195"><path d="M491 548C520 550 520 568 551 568M491 608C520 606 520 588 551 588" stroke="#b896e0" stroke-width="1.5" fill="none"/><path d="M491 543L496 548L491 553L486 548Z" fill="#c8a0f0" stroke="#222" stroke-width="0.8"/><path d="M491 603L496 608L491 613L486 608Z" fill="#c8a0f0" stroke="#222" stroke-width="0.8"/><path d="M551 563L556 568L551 573L546 568Z" fill="#c8a0f0" stroke="#222" stroke-width="0.8"/><path d="M551 583L556 588L551 593L546 588Z" fill="#c8a0f0" stroke="#222" stroke-width="0.8"/><path d="M731 543L736 548L731 553L726 548Z" fill="#8a7a8a" stroke="#222" stroke-width="0.8"/></svg><svg width="8" height="10" style="left:1034px;top:604px"><path d="M0 0V9L5 4.5Z" fill="#666"/></svg>
</body></html>
